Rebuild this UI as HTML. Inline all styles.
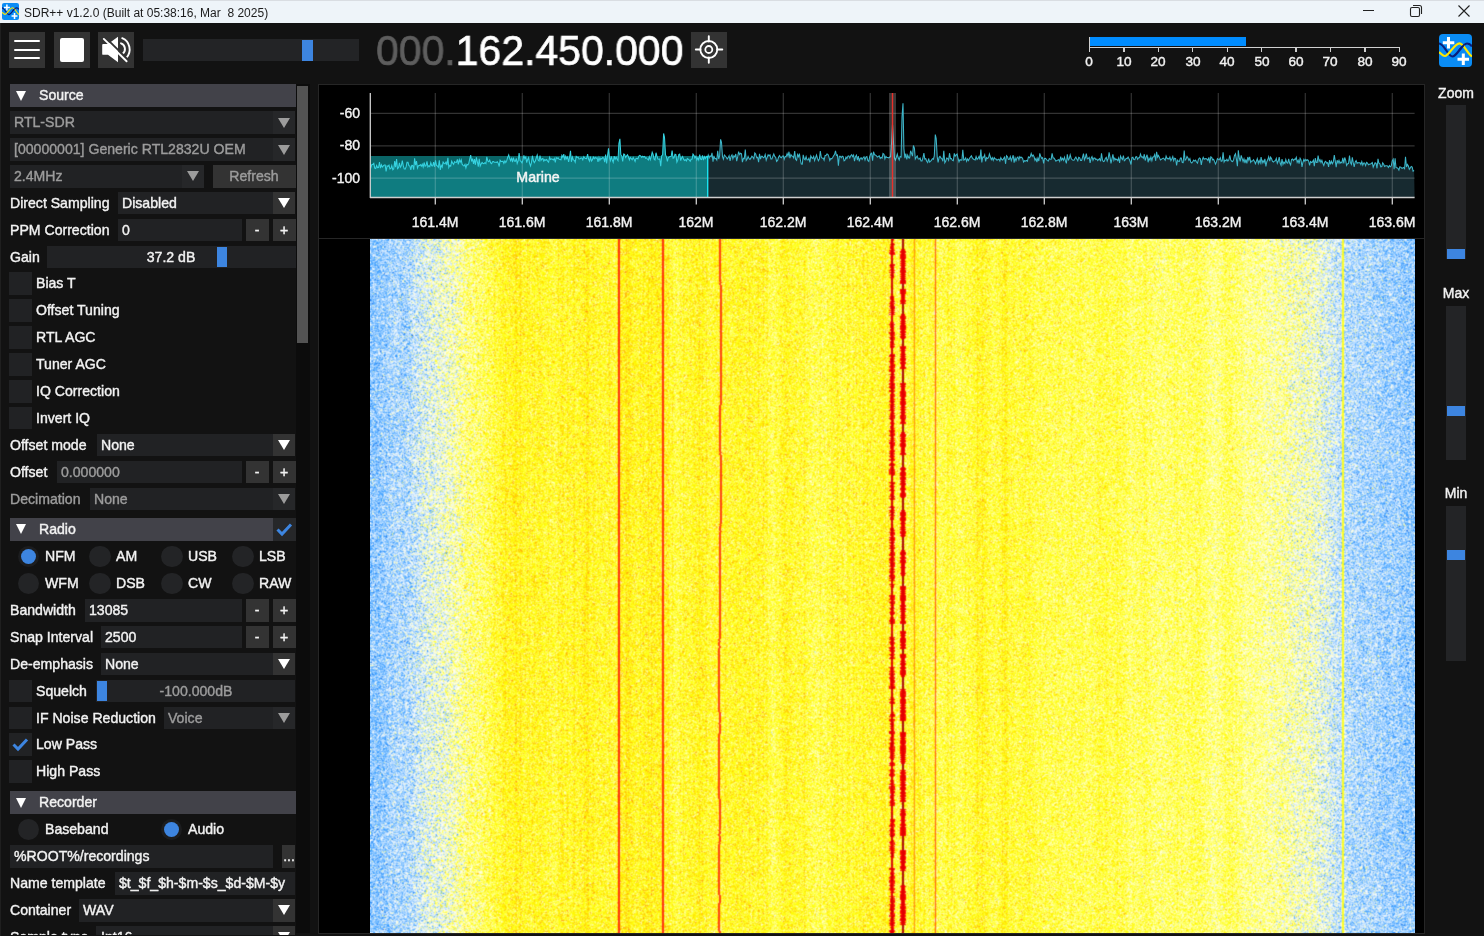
<!DOCTYPE html><html><head><meta charset="utf-8"><style>
html,body{margin:0;padding:0}
body{width:1484px;height:936px;overflow:hidden;background:#121212;position:relative;font-family:"Liberation Sans",sans-serif}
div,svg{position:absolute}
.t{white-space:nowrap;will-change:transform;-webkit-text-stroke:0.4px currentColor}
</style></head><body>

<div style="left:0px;top:0px;width:1484px;height:23px;background:#eef4f9;border-top:1px solid #d9dde2;box-sizing:border-box"></div>
<svg style="left:2px;top:3px" width="17" height="17" viewBox="0 0 33 33">
<defs><clipPath id="lc2"><rect x="19.5" y="9" width="5.5" height="7"/></clipPath></defs>
<rect x="0" y="0" width="33" height="33" rx="4" fill="#0a8cf5"/>
<path d="M0 9.5 C5 9.5 9 22.5 13.5 22.5 C18 22.5 23 9.5 28 9.5 C31 9.5 32 11 33 12.5" stroke="#0a1f7a" stroke-width="2.2" fill="none"/>
<path d="M0 18 C3 21 4 22 6 22 C10 22 15 9.3 20.5 9.3 C25 9.3 29 21 33 22.2" stroke="#ffe800" stroke-width="2.2" fill="none"/>
<path d="M0 9.5 C5 9.5 9 22.5 13.5 22.5 C18 22.5 23 9.5 28 9.5 C31 9.5 32 11 33 12.5" stroke="#0a1f7a" stroke-width="2.2" fill="none" clip-path="url(#lc2)"/>
<path d="M9.5 3 V14.5 M3.8 8.8 H15.3 M24.3 19.5 V31 M18.5 25.2 H30" stroke="#fff" stroke-width="3" fill="none"/>
</svg>
<div class="t" style="left:24px;top:1.7px;height:22px;line-height:22px;color:#1b1b1b;font-size:12px;-webkit-text-stroke:0">SDR++ v1.2.0 (Built at 05:38:16, Mar&nbsp; 8 2025)</div>
<div style="left:1363px;top:10.2px;width:11px;height:1.2px;background:#222;"></div>
<svg style="left:1408px;top:4px" width="16" height="14" viewBox="0 0 16 14"><rect x="2.5" y="3.5" width="9" height="9" rx="1.5" stroke="#222" stroke-width="1.1" fill="none"/><path d="M5 1.5 H11.5 A2 2 0 0 1 13.5 3.5 V10" stroke="#222" stroke-width="1.1" fill="none"/></svg>
<svg style="left:1457px;top:4px" width="14" height="14" viewBox="0 0 14 14"><path d="M1.5 1.5 L12.5 12.5 M12.5 1.5 L1.5 12.5" stroke="#222" stroke-width="1.1" fill="none"/></svg>
<div style="left:9px;top:32px;width:36px;height:36px;background:#333333;"></div>
<div style="left:54px;top:32px;width:36px;height:36px;background:#333333;"></div>
<div style="left:98px;top:32px;width:36px;height:36px;background:#333333;"></div>
<div style="left:14px;top:40.2px;width:26px;height:2.2px;background:#fff;border-radius:1px"></div>
<div style="left:14px;top:48.7px;width:26px;height:2.2px;background:#fff;border-radius:1px"></div>
<div style="left:14px;top:57.2px;width:26px;height:2.2px;background:#fff;border-radius:1px"></div>
<div style="left:59.8px;top:37.6px;width:24.3px;height:24.3px;background:#fff;border-radius:2px"></div>
<svg style="left:98px;top:32px" width="36" height="36" viewBox="0 0 36 36">
<path d="M4.2 13 Q4.2 12.1 5.1 12.1 H10 L20 4.8 V30.2 L10 22.8 H5.1 Q4.2 22.8 4.2 21.9 Z" fill="#fff"/>
<path d="M23 11.3 A6 6 0 0 1 24.6 21.7" stroke="#fff" stroke-width="1.9" fill="none" stroke-linecap="round"/>
<path d="M24.2 6.2 A12.2 12.2 0 0 1 28.5 25.6" stroke="#fff" stroke-width="1.9" fill="none" stroke-linecap="round"/>
<path d="M7.3 5.4 L30.2 27.9" stroke="#333" stroke-width="2"/>
<path d="M5.8 6.9 L28.6 29.3" stroke="#fff" stroke-width="1.9" stroke-linecap="round"/>
</svg>
<div style="left:143px;top:39px;width:216px;height:22px;background:#232426;"></div>
<div style="left:302px;top:40px;width:11px;height:20.5px;background:#3d85e0;"></div>
<div class="t" style="left:375.9px;top:27.6px;height:46px;line-height:46px;font-size:42.4px;color:#fff;transform:scaleX(0.966);transform-origin:0 0;-webkit-text-stroke:0.7px currentColor"><span style="color:#5e5e5e">000.</span>162.450.000</div>
<div style="left:691px;top:32px;width:36px;height:36px;background:#333333;"></div>
<svg style="left:691px;top:32px" width="36" height="36" viewBox="0 0 36 36">
<circle cx="17.8" cy="17.5" r="8.5" stroke="#fff" stroke-width="1.8" fill="none"/>
<circle cx="17.8" cy="17.5" r="3.5" stroke="#fff" stroke-width="1.8" fill="none"/>
<path d="M17.8 4.3 V9.5 M17.8 25.5 V30.7 M4.8 17.5 H9.5 M26.1 17.5 H31.3" stroke="#fff" stroke-width="1.9" stroke-linecap="round"/>
</svg>
<div style="left:1090px;top:37.2px;width:156px;height:8.8px;background:#008cff;"></div>
<div style="left:1089px;top:37px;width:1.3px;height:15px;background:#d0d0d0;"></div>
<div style="left:1089px;top:46.6px;width:310.5px;height:1.3px;background:#d0d0d0;"></div>
<div style="left:1088.8000000000002px;top:47px;width:1.3px;height:5px;background:#d0d0d0;"></div>
<div class="t" style="left:989.4000000000001px;width:200px;text-align:center;top:55.2px;height:14px;line-height:14px;color:#f2f2f2;font-size:13.6px;">0</div>
<div style="left:1123.2300000000002px;top:47px;width:1.3px;height:5px;background:#d0d0d0;"></div>
<div class="t" style="left:1023.8300000000002px;width:200px;text-align:center;top:55.2px;height:14px;line-height:14px;color:#f2f2f2;font-size:13.6px;">10</div>
<div style="left:1157.66px;top:47px;width:1.3px;height:5px;background:#d0d0d0;"></div>
<div class="t" style="left:1058.26px;width:200px;text-align:center;top:55.2px;height:14px;line-height:14px;color:#f2f2f2;font-size:13.6px;">20</div>
<div style="left:1192.0900000000001px;top:47px;width:1.3px;height:5px;background:#d0d0d0;"></div>
<div class="t" style="left:1092.69px;width:200px;text-align:center;top:55.2px;height:14px;line-height:14px;color:#f2f2f2;font-size:13.6px;">30</div>
<div style="left:1226.5200000000002px;top:47px;width:1.3px;height:5px;background:#d0d0d0;"></div>
<div class="t" style="left:1127.1200000000001px;width:200px;text-align:center;top:55.2px;height:14px;line-height:14px;color:#f2f2f2;font-size:13.6px;">40</div>
<div style="left:1260.9500000000003px;top:47px;width:1.3px;height:5px;background:#d0d0d0;"></div>
<div class="t" style="left:1161.5500000000002px;width:200px;text-align:center;top:55.2px;height:14px;line-height:14px;color:#f2f2f2;font-size:13.6px;">50</div>
<div style="left:1295.38px;top:47px;width:1.3px;height:5px;background:#d0d0d0;"></div>
<div class="t" style="left:1195.98px;width:200px;text-align:center;top:55.2px;height:14px;line-height:14px;color:#f2f2f2;font-size:13.6px;">60</div>
<div style="left:1329.8100000000002px;top:47px;width:1.3px;height:5px;background:#d0d0d0;"></div>
<div class="t" style="left:1230.41px;width:200px;text-align:center;top:55.2px;height:14px;line-height:14px;color:#f2f2f2;font-size:13.6px;">70</div>
<div style="left:1364.2400000000002px;top:47px;width:1.3px;height:5px;background:#d0d0d0;"></div>
<div class="t" style="left:1264.8400000000001px;width:200px;text-align:center;top:55.2px;height:14px;line-height:14px;color:#f2f2f2;font-size:13.6px;">80</div>
<div style="left:1398.67px;top:47px;width:1.3px;height:5px;background:#d0d0d0;"></div>
<div class="t" style="left:1299.27px;width:200px;text-align:center;top:55.2px;height:14px;line-height:14px;color:#f2f2f2;font-size:13.6px;">90</div>
<svg style="left:1439px;top:34px" width="33" height="33" viewBox="0 0 33 33">
<defs><clipPath id="lc1439"><rect x="19.5" y="9" width="5.5" height="7"/></clipPath></defs>
<rect x="0" y="0" width="33" height="33" rx="4" fill="#0a8cf5"/>
<path d="M0 9.5 C5 9.5 9 22.5 13.5 22.5 C18 22.5 23 9.5 28 9.5 C31 9.5 32 11 33 12.5" stroke="#0a1f7a" stroke-width="2.2" fill="none"/>
<path d="M0 18 C3 21 4 22 6 22 C10 22 15 9.3 20.5 9.3 C25 9.3 29 21 33 22.2" stroke="#ffe800" stroke-width="2.2" fill="none"/>
<path d="M0 9.5 C5 9.5 9 22.5 13.5 22.5 C18 22.5 23 9.5 28 9.5 C31 9.5 32 11 33 12.5" stroke="#0a1f7a" stroke-width="2.2" fill="none" clip-path="url(#lc1439)"/>
<path d="M9.5 3 V14.5 M3.8 8.8 H15.3 M24.3 19.5 V31 M18.5 25.2 H30" stroke="#fff" stroke-width="3" fill="none"/>
</svg>
<div style="left:296px;top:84px;width:14px;height:849px;background:#0c0c0c;"></div>
<div style="left:297px;top:86px;width:11.3px;height:257px;background:#535353;"></div>
<div style="left:318px;top:84px;width:1px;height:849px;background:#262626;"></div>
<div style="left:10px;top:84.2px;width:285.5px;height:22.7px;background:#424249;"></div>
<div style="left:16.1px;top:90.55px;width:0;height:0;border-left:5.5px solid transparent;border-right:5.5px solid transparent;border-top:10px solid #fff"></div>
<div class="t" style="left:38.5px;top:84.2px;height:22.7px;line-height:22.7px;color:#f2f2f2;font-size:14.1px;">Source</div>
<div style="left:10px;top:111.2px;width:285px;height:22.7px;background:#212224;"></div>
<div style="left:272.5px;top:111.2px;width:22.5px;height:22.7px;background:#262729;"></div>
<div style="left:277.8px;top:117.55px;width:0;height:0;border-left:6.0px solid transparent;border-right:6.0px solid transparent;border-top:10px solid #9c9c9c"></div>
<div class="t" style="left:14.2px;top:111.2px;height:22.7px;line-height:22.7px;color:#9c9c9c;font-size:14.1px;">RTL-SDR</div>
<div style="left:10px;top:138.2px;width:285px;height:22.7px;background:#212224;"></div>
<div style="left:272.5px;top:138.2px;width:22.5px;height:22.7px;background:#262729;"></div>
<div style="left:277.8px;top:144.54999999999998px;width:0;height:0;border-left:6.0px solid transparent;border-right:6.0px solid transparent;border-top:10px solid #9c9c9c"></div>
<div class="t" style="left:14.2px;top:138.2px;height:22.7px;line-height:22.7px;color:#9c9c9c;font-size:14.1px;">[00000001] Generic RTL2832U OEM</div>
<div style="left:10px;top:164.9px;width:194px;height:22.7px;background:#212224;"></div>
<div style="left:181.5px;top:164.9px;width:22.5px;height:22.7px;background:#262729;"></div>
<div style="left:186.8px;top:171.25px;width:0;height:0;border-left:6.0px solid transparent;border-right:6.0px solid transparent;border-top:10px solid #9c9c9c"></div>
<div class="t" style="left:14.2px;top:164.9px;height:22.7px;line-height:22.7px;color:#9c9c9c;font-size:14.1px;">2.4MHz</div>
<div style="left:213px;top:164.9px;width:82.5px;height:22.7px;background:#333333;"></div>
<div class="t" style="left:154.25px;width:200px;text-align:center;top:164.9px;height:22.7px;line-height:22.7px;color:#9c9c9c;font-size:14.1px;">Refresh</div>
<div class="t" style="left:9.8px;top:191.8px;height:22.7px;line-height:22.7px;color:#f2f2f2;font-size:14.1px;">Direct Sampling</div>
<div style="left:118px;top:191.8px;width:177px;height:22.7px;background:#212224;"></div>
<div style="left:272.5px;top:191.8px;width:22.5px;height:22.7px;background:#333333;"></div>
<div style="left:277.8px;top:198.15px;width:0;height:0;border-left:6.0px solid transparent;border-right:6.0px solid transparent;border-top:10px solid #fff"></div>
<div class="t" style="left:122.2px;top:191.8px;height:22.7px;line-height:22.7px;color:#f2f2f2;font-size:14.1px;">Disabled</div>
<div class="t" style="left:9.8px;top:218.7px;height:22.7px;line-height:22.7px;color:#f2f2f2;font-size:14.1px;">PPM Correction</div>
<div style="left:118px;top:218.7px;width:123.5px;height:22.7px;background:#212224;"></div>
<div class="t" style="left:122.2px;top:218.7px;height:22.7px;line-height:22.7px;color:#f2f2f2;font-size:14.1px;">0</div>
<div style="left:246px;top:218.7px;width:22.5px;height:22.7px;background:#333333;"></div>
<div class="t" style="left:157.25px;width:200px;text-align:center;top:218.7px;height:22.7px;line-height:22.7px;color:#f2f2f2;font-size:14.1px;">-</div>
<div style="left:273px;top:218.7px;width:22.5px;height:22.7px;background:#333333;"></div>
<div class="t" style="left:184.25px;width:200px;text-align:center;top:218.7px;height:22.7px;line-height:22.7px;color:#f2f2f2;font-size:14.1px;">+</div>
<div class="t" style="left:9.8px;top:245.6px;height:22.7px;line-height:22.7px;color:#f2f2f2;font-size:14.1px;">Gain</div>
<div style="left:46.5px;top:245.6px;width:249px;height:22.7px;background:#212224;"></div>
<div style="left:216.5px;top:246.6px;width:10.5px;height:20.5px;background:#3d85e0;"></div>
<div class="t" style="left:71px;width:200px;text-align:center;top:245.6px;height:22.7px;line-height:22.7px;color:#f2f2f2;font-size:14.1px;">37.2 dB</div>
<div style="left:9px;top:272.3px;width:23px;height:22.7px;background:#212224;"></div>
<div class="t" style="left:36.2px;top:272.3px;height:22.7px;line-height:22.7px;color:#f2f2f2;font-size:14.1px;">Bias T</div>
<div style="left:9px;top:299.2px;width:23px;height:22.7px;background:#212224;"></div>
<div class="t" style="left:36.2px;top:299.2px;height:22.7px;line-height:22.7px;color:#f2f2f2;font-size:14.1px;">Offset Tuning</div>
<div style="left:9px;top:326.1px;width:23px;height:22.7px;background:#212224;"></div>
<div class="t" style="left:36.2px;top:326.1px;height:22.7px;line-height:22.7px;color:#f2f2f2;font-size:14.1px;">RTL AGC</div>
<div style="left:9px;top:353.0px;width:23px;height:22.7px;background:#212224;"></div>
<div class="t" style="left:36.2px;top:353.0px;height:22.7px;line-height:22.7px;color:#f2f2f2;font-size:14.1px;">Tuner AGC</div>
<div style="left:9px;top:379.9px;width:23px;height:22.7px;background:#212224;"></div>
<div class="t" style="left:36.2px;top:379.9px;height:22.7px;line-height:22.7px;color:#f2f2f2;font-size:14.1px;">IQ Correction</div>
<div style="left:9px;top:406.8px;width:23px;height:22.7px;background:#212224;"></div>
<div class="t" style="left:36.2px;top:406.8px;height:22.7px;line-height:22.7px;color:#f2f2f2;font-size:14.1px;">Invert IQ</div>
<div class="t" style="left:9.8px;top:433.8px;height:22.7px;line-height:22.7px;color:#f2f2f2;font-size:14.1px;">Offset mode</div>
<div style="left:97px;top:433.8px;width:198px;height:22.7px;background:#212224;"></div>
<div style="left:272.5px;top:433.8px;width:22.5px;height:22.7px;background:#333333;"></div>
<div style="left:277.8px;top:440.15000000000003px;width:0;height:0;border-left:6.0px solid transparent;border-right:6.0px solid transparent;border-top:10px solid #fff"></div>
<div class="t" style="left:101.2px;top:433.8px;height:22.7px;line-height:22.7px;color:#f2f2f2;font-size:14.1px;">None</div>
<div class="t" style="left:9.8px;top:460.7px;height:22.7px;line-height:22.7px;color:#f2f2f2;font-size:14.1px;">Offset</div>
<div style="left:57px;top:460.7px;width:184.5px;height:22.7px;background:#212224;"></div>
<div class="t" style="left:61.2px;top:460.7px;height:22.7px;line-height:22.7px;color:#9c9c9c;font-size:14.1px;">0.000000</div>
<div style="left:246px;top:460.7px;width:22.5px;height:22.7px;background:#333333;"></div>
<div class="t" style="left:157.25px;width:200px;text-align:center;top:460.7px;height:22.7px;line-height:22.7px;color:#f2f2f2;font-size:14.1px;">-</div>
<div style="left:273px;top:460.7px;width:22.5px;height:22.7px;background:#333333;"></div>
<div class="t" style="left:184.25px;width:200px;text-align:center;top:460.7px;height:22.7px;line-height:22.7px;color:#f2f2f2;font-size:14.1px;">+</div>
<div class="t" style="left:9.8px;top:487.6px;height:22.7px;line-height:22.7px;color:#9c9c9c;font-size:14.1px;">Decimation</div>
<div style="left:90px;top:487.6px;width:205px;height:22.7px;background:#212224;"></div>
<div style="left:272.5px;top:487.6px;width:22.5px;height:22.7px;background:#262729;"></div>
<div style="left:277.8px;top:493.95000000000005px;width:0;height:0;border-left:6.0px solid transparent;border-right:6.0px solid transparent;border-top:10px solid #9c9c9c"></div>
<div class="t" style="left:94.2px;top:487.6px;height:22.7px;line-height:22.7px;color:#9c9c9c;font-size:14.1px;">None</div>
<div style="left:10px;top:518px;width:262.8px;height:22.7px;background:#424249;"></div>
<div style="left:16.1px;top:524.35px;width:0;height:0;border-left:5.5px solid transparent;border-right:5.5px solid transparent;border-top:10px solid #fff"></div>
<div class="t" style="left:38.5px;top:518px;height:22.7px;line-height:22.7px;color:#f2f2f2;font-size:14.1px;">Radio</div>
<div style="left:273px;top:518px;width:22.5px;height:22.7px;background:#262729;"></div>
<svg style="left:273px;top:518px" width="23" height="23" viewBox="0 0 23 23"><path d="M4.5 11.5 L9 16 L18 6.5" stroke="#3d85e0" stroke-width="3" fill="none"/></svg>
<div style="left:18.1px;top:545.8px;width:21.2px;height:21.2px;border-radius:50%;background:#1c1d1f"></div>
<div style="left:21.1px;top:548.8px;width:15.2px;height:15.2px;border-radius:50%;background:#3d85e0"></div>
<div class="t" style="left:44.7px;top:545.05px;height:22.7px;line-height:22.7px;color:#f2f2f2;font-size:14.1px;">NFM</div>
<div style="left:89.4px;top:545.6px;width:21.6px;height:21.6px;border-radius:50%;background:#232426"></div>
<div class="t" style="left:116.2px;top:545.05px;height:22.7px;line-height:22.7px;color:#f2f2f2;font-size:14.1px;">AM</div>
<div style="left:161.0px;top:545.6px;width:21.6px;height:21.6px;border-radius:50%;background:#232426"></div>
<div class="t" style="left:187.8px;top:545.05px;height:22.7px;line-height:22.7px;color:#f2f2f2;font-size:14.1px;">USB</div>
<div style="left:232.29999999999998px;top:545.6px;width:21.6px;height:21.6px;border-radius:50%;background:#232426"></div>
<div class="t" style="left:259.1px;top:545.05px;height:22.7px;line-height:22.7px;color:#f2f2f2;font-size:14.1px;">LSB</div>
<div style="left:17.9px;top:572.5px;width:21.6px;height:21.6px;border-radius:50%;background:#232426"></div>
<div class="t" style="left:44.7px;top:571.9499999999999px;height:22.7px;line-height:22.7px;color:#f2f2f2;font-size:14.1px;">WFM</div>
<div style="left:89.4px;top:572.5px;width:21.6px;height:21.6px;border-radius:50%;background:#232426"></div>
<div class="t" style="left:116.2px;top:571.9499999999999px;height:22.7px;line-height:22.7px;color:#f2f2f2;font-size:14.1px;">DSB</div>
<div style="left:161.0px;top:572.5px;width:21.6px;height:21.6px;border-radius:50%;background:#232426"></div>
<div class="t" style="left:187.8px;top:571.9499999999999px;height:22.7px;line-height:22.7px;color:#f2f2f2;font-size:14.1px;">CW</div>
<div style="left:232.29999999999998px;top:572.5px;width:21.6px;height:21.6px;border-radius:50%;background:#232426"></div>
<div class="t" style="left:259.1px;top:571.9499999999999px;height:22.7px;line-height:22.7px;color:#f2f2f2;font-size:14.1px;">RAW</div>
<div class="t" style="left:9.8px;top:598.9px;height:22.7px;line-height:22.7px;color:#f2f2f2;font-size:14.1px;">Bandwidth</div>
<div style="left:85px;top:598.9px;width:156.5px;height:22.7px;background:#212224;"></div>
<div class="t" style="left:89.2px;top:598.9px;height:22.7px;line-height:22.7px;color:#f2f2f2;font-size:14.1px;">13085</div>
<div style="left:246px;top:598.9px;width:22.5px;height:22.7px;background:#333333;"></div>
<div class="t" style="left:157.25px;width:200px;text-align:center;top:598.9px;height:22.7px;line-height:22.7px;color:#f2f2f2;font-size:14.1px;">-</div>
<div style="left:273px;top:598.9px;width:22.5px;height:22.7px;background:#333333;"></div>
<div class="t" style="left:184.25px;width:200px;text-align:center;top:598.9px;height:22.7px;line-height:22.7px;color:#f2f2f2;font-size:14.1px;">+</div>
<div class="t" style="left:9.8px;top:625.8px;height:22.7px;line-height:22.7px;color:#f2f2f2;font-size:14.1px;">Snap Interval</div>
<div style="left:101px;top:625.8px;width:140.5px;height:22.7px;background:#212224;"></div>
<div class="t" style="left:105.2px;top:625.8px;height:22.7px;line-height:22.7px;color:#f2f2f2;font-size:14.1px;">2500</div>
<div style="left:246px;top:625.8px;width:22.5px;height:22.7px;background:#333333;"></div>
<div class="t" style="left:157.25px;width:200px;text-align:center;top:625.8px;height:22.7px;line-height:22.7px;color:#f2f2f2;font-size:14.1px;">-</div>
<div style="left:273px;top:625.8px;width:22.5px;height:22.7px;background:#333333;"></div>
<div class="t" style="left:184.25px;width:200px;text-align:center;top:625.8px;height:22.7px;line-height:22.7px;color:#f2f2f2;font-size:14.1px;">+</div>
<div class="t" style="left:9.8px;top:652.7px;height:22.7px;line-height:22.7px;color:#f2f2f2;font-size:14.1px;">De-emphasis</div>
<div style="left:101px;top:652.7px;width:194px;height:22.7px;background:#212224;"></div>
<div style="left:272.5px;top:652.7px;width:22.5px;height:22.7px;background:#333333;"></div>
<div style="left:277.8px;top:659.0500000000001px;width:0;height:0;border-left:6.0px solid transparent;border-right:6.0px solid transparent;border-top:10px solid #fff"></div>
<div class="t" style="left:105.2px;top:652.7px;height:22.7px;line-height:22.7px;color:#f2f2f2;font-size:14.1px;">None</div>
<div style="left:9px;top:679.6px;width:23px;height:22.7px;background:#212224;"></div>
<div class="t" style="left:36.2px;top:679.6px;height:22.7px;line-height:22.7px;color:#f2f2f2;font-size:14.1px;">Squelch</div>
<div style="left:96.3px;top:679.6px;width:199px;height:22.7px;background:#212224;"></div>
<div style="left:96.8px;top:680.6px;width:10.5px;height:20.5px;background:#3d85e0;"></div>
<div class="t" style="left:96px;width:200px;text-align:center;top:679.6px;height:22.7px;line-height:22.7px;color:#9c9c9c;font-size:14.1px;">-100.000dB</div>
<div style="left:9px;top:706.5px;width:23px;height:22.7px;background:#212224;"></div>
<div class="t" style="left:36.2px;top:706.5px;height:22.7px;line-height:22.7px;color:#f2f2f2;font-size:14.1px;">IF Noise Reduction</div>
<div style="left:164px;top:706.5px;width:131px;height:22.7px;background:#212224;"></div>
<div style="left:272.5px;top:706.5px;width:22.5px;height:22.7px;background:#262729;"></div>
<div style="left:277.8px;top:712.85px;width:0;height:0;border-left:6.0px solid transparent;border-right:6.0px solid transparent;border-top:10px solid #9c9c9c"></div>
<div class="t" style="left:168.2px;top:706.5px;height:22.7px;line-height:22.7px;color:#9c9c9c;font-size:14.1px;">Voice</div>
<div style="left:9px;top:733.4px;width:23px;height:22.7px;background:#212224;"></div>
<svg style="left:9px;top:733.4px" width="23" height="23" viewBox="0 0 23 23"><path d="M4.5 11.5 L9 16 L18 6.5" stroke="#3d85e0" stroke-width="3" fill="none"/></svg>
<div class="t" style="left:36.2px;top:733.4px;height:22.7px;line-height:22.7px;color:#f2f2f2;font-size:14.1px;">Low Pass</div>
<div style="left:9px;top:760.3px;width:23px;height:22.7px;background:#212224;"></div>
<div class="t" style="left:36.2px;top:760.3px;height:22.7px;line-height:22.7px;color:#f2f2f2;font-size:14.1px;">High Pass</div>
<div style="left:10px;top:791.3px;width:285.5px;height:22.7px;background:#424249;"></div>
<div style="left:16.1px;top:797.65px;width:0;height:0;border-left:5.5px solid transparent;border-right:5.5px solid transparent;border-top:10px solid #fff"></div>
<div class="t" style="left:38.5px;top:791.3px;height:22.7px;line-height:22.7px;color:#f2f2f2;font-size:14.1px;">Recorder</div>
<div style="left:17.9px;top:818.6px;width:21.6px;height:21.6px;border-radius:50%;background:#232426"></div>
<div class="t" style="left:44.7px;top:818.05px;height:22.7px;line-height:22.7px;color:#f2f2f2;font-size:14.1px;">Baseband</div>
<div style="left:161.20000000000002px;top:818.8px;width:21.2px;height:21.2px;border-radius:50%;background:#1c1d1f"></div>
<div style="left:164.20000000000002px;top:821.8px;width:15.2px;height:15.2px;border-radius:50%;background:#3d85e0"></div>
<div class="t" style="left:187.8px;top:818.05px;height:22.7px;line-height:22.7px;color:#f2f2f2;font-size:14.1px;">Audio</div>
<div style="left:9.5px;top:845.2px;width:263.3px;height:22.7px;background:#212224;"></div>
<div class="t" style="left:13.7px;top:845.2px;height:22.7px;line-height:22.7px;color:#f2f2f2;font-size:14.1px;">%ROOT%/recordings</div>
<div style="left:281.8px;top:845.2px;width:13.7px;height:22.7px;background:#333333;"></div>
<div class="t" style="left:188.65000000000003px;width:200px;text-align:center;top:845.2px;height:22.7px;line-height:22.7px;color:#f2f2f2;font-size:14.1px;">...</div>
<div class="t" style="left:9.8px;top:872.1px;height:22.7px;line-height:22.7px;color:#f2f2f2;font-size:14.1px;">Name template</div>
<div style="left:115px;top:872.1px;width:180px;height:22.7px;background:#212224;"></div>
<div class="t" style="left:119.2px;top:872.1px;height:22.7px;line-height:22.7px;color:#f2f2f2;font-size:14.1px;">$t_$f_$h-$m-$s_$d-$M-$y</div>
<div class="t" style="left:9.8px;top:899px;height:22.7px;line-height:22.7px;color:#f2f2f2;font-size:14.1px;">Container</div>
<div style="left:79px;top:899px;width:216px;height:22.7px;background:#212224;"></div>
<div style="left:272.5px;top:899px;width:22.5px;height:22.7px;background:#333333;"></div>
<div style="left:277.8px;top:905.35px;width:0;height:0;border-left:6.0px solid transparent;border-right:6.0px solid transparent;border-top:10px solid #fff"></div>
<div class="t" style="left:83.2px;top:899px;height:22.7px;line-height:22.7px;color:#f2f2f2;font-size:14.1px;">WAV</div>
<div style="left:0;top:925.9px;width:296px;height:9px;overflow:hidden">
<div class="t" style="left:9.8px;top:0.4px;height:22.7px;line-height:22.7px;color:#f2f2f2;font-size:14.1px;">Sample type</div>
<div style="left:96.4px;top:0px;width:198.6px;height:22.7px;background:#212224;"></div>
<div style="left:272.5px;top:0px;width:22.5px;height:22.7px;background:#333333;"></div>
<div style="left:277.8px;top:6.35px;width:0;height:0;border-left:6.0px solid transparent;border-right:6.0px solid transparent;border-top:10px solid #fff"></div>
<div class="t" style="left:100.60000000000001px;top:0px;height:22.7px;line-height:22.7px;color:#f2f2f2;font-size:14.1px;">Int16</div>
</div>
<div style="left:0px;top:23px;width:1px;height:913px;background:#1f1f1f;"></div>
<div style="left:318px;top:84px;width:1107px;height:850px;background:#000;border:1px solid #262626;box-sizing:border-box"></div>
<div style="left:319px;top:238px;width:1105px;height:1.1px;background:#262626;"></div>
<svg style="left:0;top:0" width="1484" height="240" viewBox="0 0 1484 240">
<defs><clipPath id="cb"><rect x="370" y="0" width="337.7" height="240"/></clipPath><clipPath id="co"><rect x="707.7" y="0" width="800" height="240"/></clipPath></defs>
<rect x="370" y="156" width="337.70000000000005" height="41.5" fill="#0a6567"/>
<polygon points="370,197.5 370.0,166.0 370.9,167.5 371.9,164.4 372.8,164.4 373.8,163.3 374.7,168.1 375.7,168.5 376.6,165.5 377.6,167.6 378.5,167.5 379.5,162.0 380.4,168.1 381.4,164.9 382.3,167.1 383.3,165.9 384.2,165.0 385.2,165.1 386.1,171.5 387.1,165.8 388.0,166.4 389.0,165.2 389.9,169.0 390.9,168.3 391.8,165.5 392.8,169.8 393.7,169.0 394.7,161.1 395.6,167.1 396.6,159.0 397.5,168.7 398.5,167.8 399.4,162.8 400.4,167.2 401.3,165.9 402.3,160.7 403.2,165.4 404.2,168.9 405.1,169.1 406.1,166.9 407.0,162.3 408.0,162.3 408.9,165.6 409.9,166.1 410.8,169.9 411.8,165.3 412.7,165.4 413.7,169.6 414.6,158.3 415.6,165.2 416.5,161.0 417.5,168.0 418.4,165.8 419.4,165.5 420.3,164.6 421.3,166.2 422.2,164.2 423.2,167.0 424.1,162.5 425.1,166.2 426.0,165.7 427.0,161.4 427.9,167.0 428.9,165.7 429.8,166.7 430.8,162.7 431.7,165.7 432.7,165.9 433.6,162.1 434.6,166.8 435.5,160.3 436.5,165.5 437.4,165.9 438.4,167.4 439.3,160.2 440.3,169.9 441.2,165.3 442.2,167.2 443.1,162.1 444.1,163.4 445.0,163.8 446.0,162.1 446.9,165.1 447.9,157.9 448.8,167.5 449.8,165.3 450.7,166.2 451.7,161.1 452.6,163.0 453.6,164.4 454.5,161.8 455.5,162.3 456.4,162.5 457.4,159.4 458.3,164.5 459.3,159.6 460.2,162.1 461.2,159.8 462.1,164.2 463.1,165.3 464.0,166.0 465.0,164.4 465.9,168.0 466.9,164.4 467.8,165.0 468.8,163.2 469.7,159.0 470.7,155.1 471.6,161.5 472.6,158.6 473.5,163.9 474.5,159.2 475.4,164.8 476.4,157.4 477.3,161.5 478.3,166.7 479.2,158.7 480.2,166.1 481.1,164.1 482.1,162.4 483.0,163.4 484.0,163.6 484.9,162.7 485.9,163.6 486.8,156.8 487.8,161.0 488.7,161.7 489.7,160.1 490.6,162.9 491.6,163.7 492.5,161.7 493.5,161.5 494.4,162.3 495.4,162.2 496.3,162.4 497.3,161.7 498.2,163.2 499.2,166.5 500.1,160.3 501.1,161.4 502.0,161.5 503.0,161.2 503.9,163.4 504.9,160.8 505.8,162.6 506.8,160.4 507.7,157.4 508.7,154.9 509.6,158.4 510.6,160.7 511.5,157.6 512.5,162.2 513.4,157.6 514.4,161.0 515.3,161.4 516.3,158.4 517.2,163.4 518.2,160.7 519.1,153.0 520.1,160.7 521.0,161.4 522.0,162.8 522.9,160.2 523.9,155.4 524.8,158.7 525.8,156.9 526.7,162.7 527.7,159.4 528.6,157.7 529.6,163.3 530.5,165.9 531.5,162.4 532.4,155.7 533.4,160.8 534.3,162.6 535.3,161.1 536.2,158.0 537.2,155.1 538.1,160.0 539.1,161.0 540.0,155.7 541.0,160.4 541.9,159.0 542.9,158.5 543.8,161.1 544.8,159.6 545.7,160.3 546.7,159.6 547.6,161.1 548.6,162.2 549.6,157.2 550.5,159.4 551.5,158.8 552.4,159.3 553.4,160.0 554.3,158.4 555.3,162.3 556.2,157.5 557.2,158.5 558.1,157.8 559.1,159.2 560.0,159.4 561.0,159.8 561.9,155.4 562.9,157.3 563.8,154.1 564.8,160.1 565.7,156.2 566.7,158.8 567.6,157.1 568.6,162.0 569.5,157.7 570.5,150.7 571.4,161.8 572.4,157.0 573.3,159.9 574.3,160.4 575.2,162.3 576.2,156.4 577.1,157.4 578.1,157.1 579.0,158.9 580.0,158.8 580.9,158.0 581.9,158.1 582.8,159.8 583.8,156.7 584.7,158.0 585.7,158.4 586.6,158.6 587.6,154.2 588.5,159.0 589.5,161.1 590.4,156.6 591.4,161.1 592.3,159.9 593.3,157.1 594.2,158.7 595.2,157.4 596.1,158.3 597.1,157.8 598.0,162.0 599.0,157.5 599.9,160.3 600.9,158.1 601.8,159.0 602.8,157.5 603.7,158.0 604.7,162.2 605.6,154.5 606.6,163.4 607.5,156.1 608.5,148.3 609.4,157.4 610.4,160.6 611.3,156.4 612.3,160.0 613.2,162.3 614.2,156.2 615.1,159.3 616.1,157.0 617.0,158.9 618.0,160.6 618.9,143.5 619.9,138.8 620.8,154.4 621.8,156.1 622.7,161.4 623.7,154.1 624.6,154.5 625.6,157.5 626.5,156.1 627.5,154.7 628.4,156.8 629.4,159.9 630.3,157.5 631.3,158.6 632.2,159.8 633.2,157.4 634.1,159.2 635.1,161.4 636.0,158.4 637.0,158.3 637.9,158.9 638.9,156.0 639.8,155.3 640.8,156.0 641.7,157.4 642.7,156.3 643.6,157.0 644.6,156.4 645.5,158.3 646.5,157.8 647.4,159.0 648.4,160.0 649.3,156.6 650.3,159.8 651.2,156.7 652.2,152.3 653.1,154.4 654.1,159.1 655.0,159.9 656.0,152.7 656.9,156.0 657.9,159.1 658.8,159.2 659.8,158.9 660.7,166.2 661.7,155.7 662.6,154.9 663.6,133.4 664.5,137.4 665.5,154.6 666.4,156.8 667.4,161.3 668.3,157.5 669.3,157.0 670.2,156.4 671.2,156.3 672.1,150.6 673.1,158.2 674.0,157.8 675.0,154.2 675.9,154.6 676.9,162.2 677.8,160.2 678.8,154.5 679.7,154.1 680.7,160.7 681.6,158.0 682.6,156.4 683.5,159.2 684.5,160.4 685.4,159.7 686.4,160.9 687.3,158.6 688.3,159.2 689.2,159.9 690.2,161.3 691.1,159.3 692.1,159.0 693.0,154.1 694.0,155.6 694.9,157.9 695.9,156.1 696.8,160.0 697.8,157.9 698.7,160.0 699.7,154.6 700.6,159.1 701.6,159.6 702.5,155.4 703.5,160.2 704.4,156.7 705.4,158.6 706.3,156.5 707.3,157.7 708.2,155.0 709.2,157.9 710.1,155.9 711.1,156.8 712.0,152.9 713.0,161.6 713.9,155.9 714.9,158.7 715.8,158.3 716.8,160.0 717.7,150.9 718.7,159.0 719.6,156.0 720.6,139.3 721.5,142.3 722.5,156.7 723.4,159.2 724.4,155.0 725.3,156.0 726.3,157.3 727.2,159.0 728.2,157.6 729.1,155.7 730.1,161.0 731.0,156.5 732.0,154.9 732.9,158.8 733.9,155.9 734.8,157.0 735.8,154.0 736.7,161.2 737.7,156.7 738.6,151.6 739.6,154.6 740.5,153.2 741.5,153.9 742.4,162.2 743.4,158.3 744.3,158.7 745.3,149.6 746.2,160.5 747.2,159.1 748.1,156.4 749.1,158.7 750.0,159.4 751.0,157.9 751.9,156.2 752.9,157.2 753.8,158.8 754.8,153.0 755.7,154.1 756.7,157.7 757.6,157.2 758.6,162.1 759.5,153.9 760.5,159.2 761.4,156.3 762.4,156.2 763.3,157.8 764.3,157.2 765.2,154.6 766.2,160.2 767.1,157.6 768.1,154.8 769.0,155.9 770.0,154.8 770.9,159.0 771.9,159.0 772.8,156.4 773.8,154.0 774.7,156.4 775.7,157.3 776.6,161.4 777.6,160.4 778.5,157.3 779.5,155.5 780.4,157.1 781.4,157.8 782.3,156.1 783.3,155.9 784.2,159.2 785.2,156.4 786.1,156.8 787.1,153.6 788.0,156.2 789.0,151.7 789.9,158.1 790.9,154.6 791.8,156.1 792.8,156.2 793.7,157.8 794.7,151.0 795.6,159.3 796.6,160.3 797.5,154.6 798.5,156.7 799.4,153.6 800.4,160.0 801.3,164.0 802.3,164.2 803.2,154.9 804.2,158.9 805.1,159.7 806.1,156.6 807.0,159.8 808.0,159.9 808.9,158.2 809.9,162.3 810.8,155.9 811.8,157.8 812.7,158.4 813.7,156.3 814.6,160.5 815.6,157.6 816.5,155.1 817.5,158.7 818.4,160.8 819.4,158.8 820.3,151.0 821.3,157.3 822.2,158.3 823.2,158.1 824.1,160.3 825.1,155.6 826.0,155.5 827.0,154.0 827.9,154.4 828.9,156.9 829.8,160.5 830.8,158.5 831.7,158.8 832.7,157.5 833.6,155.7 834.6,154.4 835.5,150.8 836.5,155.5 837.4,154.9 838.4,165.6 839.3,156.3 840.3,156.3 841.2,157.7 842.2,156.2 843.1,156.6 844.1,160.9 845.0,160.2 846.0,157.1 846.9,158.6 847.9,156.1 848.8,155.8 849.8,158.0 850.7,155.7 851.7,154.7 852.6,156.7 853.6,155.1 854.5,161.1 855.5,156.6 856.4,155.1 857.4,160.1 858.3,156.0 859.3,161.4 860.2,158.4 861.2,157.7 862.1,159.4 863.1,157.7 864.0,156.7 865.0,160.0 865.9,157.1 866.9,156.6 867.8,160.5 868.8,161.4 869.7,156.7 870.7,153.9 871.6,153.2 872.6,160.6 873.5,151.7 874.5,154.7 875.4,154.9 876.4,155.8 877.3,157.0 878.3,156.5 879.2,155.9 880.2,158.4 881.1,157.3 882.1,158.1 883.0,153.4 884.0,154.3 884.9,158.9 885.9,156.3 886.8,157.5 887.8,157.6 888.7,157.9 889.7,157.1 890.6,156.9 891.6,142.3 892.5,124.4 893.5,142.3 894.4,157.8 895.4,160.1 896.3,157.5 897.3,154.1 898.2,157.8 899.2,160.0 900.1,156.5 901.1,156.9 902.0,116.9 903.0,103.3 903.9,148.5 904.9,158.2 905.8,153.6 906.8,159.5 907.7,155.1 908.7,157.8 909.6,158.0 910.6,150.8 911.5,153.2 912.5,156.1 913.4,145.5 914.4,148.0 915.3,159.0 916.3,157.3 917.2,156.0 918.2,158.9 919.1,159.1 920.1,158.0 921.0,160.9 922.0,160.9 922.9,157.8 923.9,153.2 924.8,159.0 925.8,158.7 926.7,161.2 927.7,162.6 928.6,158.5 929.6,162.1 930.5,161.3 931.5,160.2 932.4,158.7 933.4,159.2 934.3,155.8 935.3,134.6 936.2,138.5 937.2,156.8 938.1,162.3 939.1,157.3 940.0,156.3 941.0,158.0 941.9,158.5 942.9,161.2 943.8,150.7 944.8,162.9 945.7,161.4 946.7,157.9 947.6,158.3 948.6,160.3 949.5,153.2 950.5,158.6 951.4,158.6 952.4,160.4 953.3,160.7 954.3,153.4 955.2,156.1 956.2,154.9 957.1,154.1 958.1,158.5 959.0,161.9 960.0,159.5 960.9,160.1 961.9,160.0 962.8,149.7 963.8,160.1 964.7,159.6 965.7,157.8 966.6,161.3 967.6,158.9 968.5,160.6 969.5,158.3 970.4,157.1 971.4,155.8 972.3,157.9 973.3,159.0 974.2,159.5 975.2,160.0 976.1,156.6 977.1,159.4 978.0,158.4 979.0,156.4 979.9,159.5 980.9,149.6 981.8,162.4 982.8,157.0 983.7,157.4 984.7,154.9 985.6,161.4 986.6,157.5 987.5,158.5 988.5,157.8 989.4,154.0 990.4,157.0 991.3,159.7 992.3,157.7 993.2,160.4 994.2,157.6 995.1,158.9 996.1,158.9 997.0,160.3 998.0,159.5 998.9,159.1 999.9,161.1 1000.8,157.7 1001.8,159.6 1002.7,160.0 1003.7,158.4 1004.6,157.1 1005.6,163.8 1006.5,155.7 1007.5,156.8 1008.4,159.4 1009.4,159.2 1010.3,156.6 1011.3,160.6 1012.2,158.1 1013.2,155.2 1014.1,162.7 1015.1,157.9 1016.0,160.8 1017.0,157.8 1017.9,156.9 1018.9,159.8 1019.8,156.6 1020.8,157.8 1021.7,157.3 1022.7,158.8 1023.6,162.1 1024.6,160.7 1025.5,161.1 1026.5,160.4 1027.4,161.3 1028.4,156.9 1029.3,157.7 1030.3,156.7 1031.2,153.5 1032.2,156.4 1033.1,155.0 1034.1,156.8 1035.0,160.3 1036.0,158.5 1036.9,162.0 1037.9,158.1 1038.8,161.0 1039.8,153.3 1040.7,156.3 1041.7,158.4 1042.6,157.7 1043.6,163.4 1044.5,158.5 1045.5,158.4 1046.4,159.3 1047.4,160.7 1048.3,161.1 1049.3,158.6 1050.2,159.3 1051.2,159.2 1052.1,153.3 1053.1,158.0 1054.0,158.0 1055.0,159.6 1055.9,161.2 1056.9,160.4 1057.8,160.1 1058.8,159.7 1059.7,161.5 1060.7,156.6 1061.6,160.1 1062.6,158.3 1063.5,160.3 1064.5,157.2 1065.4,160.7 1066.4,163.4 1067.3,154.3 1068.3,160.0 1069.2,158.8 1070.2,154.9 1071.1,158.2 1072.1,159.7 1073.0,160.2 1074.0,160.3 1074.9,158.5 1075.9,157.0 1076.8,159.1 1077.8,160.9 1078.7,157.3 1079.7,157.9 1080.6,160.5 1081.6,160.5 1082.5,157.5 1083.5,153.6 1084.4,159.9 1085.4,157.5 1086.3,153.6 1087.3,158.9 1088.2,158.6 1089.2,157.4 1090.1,162.9 1091.1,158.2 1092.0,156.6 1093.0,160.4 1093.9,158.1 1094.9,158.1 1095.8,159.5 1096.8,159.1 1097.7,160.6 1098.7,159.4 1099.6,158.7 1100.6,161.2 1101.5,153.4 1102.5,160.0 1103.4,161.6 1104.4,161.2 1105.3,158.4 1106.3,157.3 1107.2,161.0 1108.2,158.4 1109.1,152.4 1110.1,157.6 1111.0,163.4 1112.0,158.7 1112.9,154.3 1113.9,160.4 1114.8,158.1 1115.8,159.8 1116.7,159.3 1117.7,160.6 1118.6,158.0 1119.6,163.0 1120.5,156.1 1121.5,158.3 1122.4,159.6 1123.4,155.7 1124.3,160.7 1125.3,159.8 1126.2,158.3 1127.2,158.6 1128.1,157.1 1129.1,159.1 1130.0,161.0 1131.0,164.5 1131.9,157.7 1132.9,157.2 1133.8,159.6 1134.8,159.7 1135.7,157.0 1136.7,156.6 1137.6,159.3 1138.6,157.7 1139.5,157.7 1140.5,154.1 1141.4,157.0 1142.4,156.9 1143.3,158.3 1144.3,154.2 1145.2,160.5 1146.2,157.0 1147.1,154.7 1148.1,162.3 1149.0,158.1 1150.0,160.2 1150.9,156.9 1151.9,160.6 1152.8,157.2 1153.8,156.6 1154.7,154.6 1155.7,160.8 1156.6,151.8 1157.6,157.2 1158.5,155.4 1159.5,157.6 1160.4,159.9 1161.4,159.3 1162.3,158.6 1163.3,158.1 1164.2,158.9 1165.2,160.2 1166.1,156.0 1167.1,158.6 1168.0,158.4 1169.0,159.2 1169.9,157.1 1170.9,160.6 1171.8,159.0 1172.8,156.6 1173.7,160.7 1174.7,158.1 1175.6,158.5 1176.6,165.4 1177.5,160.1 1178.5,161.3 1179.4,161.5 1180.4,158.0 1181.3,158.1 1182.3,162.5 1183.2,162.7 1184.2,150.5 1185.1,160.2 1186.1,159.0 1187.0,156.4 1188.0,158.1 1188.9,160.3 1189.9,158.7 1190.8,162.3 1191.8,163.0 1192.7,161.7 1193.7,160.1 1194.6,161.1 1195.6,160.2 1196.5,162.0 1197.5,163.1 1198.4,159.4 1199.4,158.0 1200.3,158.6 1201.3,164.8 1202.2,159.8 1203.2,157.3 1204.1,159.3 1205.1,158.7 1206.0,158.5 1207.0,159.2 1207.9,160.5 1208.9,157.4 1209.8,163.2 1210.8,156.9 1211.7,157.4 1212.7,160.0 1213.6,159.3 1214.6,161.6 1215.5,164.1 1216.5,161.9 1217.4,158.7 1218.4,159.5 1219.3,159.8 1220.3,157.8 1221.2,161.3 1222.2,160.8 1223.1,152.3 1224.1,161.9 1225.0,160.2 1226.0,160.7 1226.9,159.2 1227.9,161.0 1228.8,159.8 1229.8,155.4 1230.7,159.7 1231.7,161.2 1232.6,161.5 1233.6,159.7 1234.5,155.4 1235.5,153.8 1236.4,159.2 1237.4,166.1 1238.3,150.3 1239.3,158.2 1240.2,161.3 1241.2,155.3 1242.1,158.3 1243.1,161.5 1244.0,158.9 1245.0,163.2 1245.9,159.3 1246.9,163.5 1247.8,157.0 1248.8,160.1 1249.7,156.8 1250.7,162.3 1251.6,161.0 1252.6,161.0 1253.5,159.8 1254.5,161.4 1255.4,163.8 1256.4,161.2 1257.3,158.7 1258.3,163.4 1259.2,160.5 1260.2,163.0 1261.1,157.0 1262.1,162.9 1263.0,160.5 1264.0,162.7 1264.9,158.8 1265.9,166.5 1266.8,161.7 1267.8,159.6 1268.7,156.7 1269.7,161.1 1270.6,157.2 1271.6,158.8 1272.5,161.5 1273.5,162.0 1274.4,161.0 1275.4,160.7 1276.3,158.3 1277.3,163.3 1278.2,161.3 1279.2,157.2 1280.1,163.0 1281.1,165.3 1282.0,159.2 1283.0,164.4 1283.9,162.1 1284.9,163.5 1285.8,159.5 1286.8,162.6 1287.7,163.2 1288.7,158.8 1289.6,163.1 1290.6,164.9 1291.5,159.6 1292.5,159.0 1293.4,160.5 1294.4,159.1 1295.3,159.5 1296.3,157.3 1297.2,162.3 1298.2,160.3 1299.1,163.7 1300.1,158.2 1301.0,159.8 1302.0,167.0 1302.9,162.5 1303.9,159.3 1304.8,161.1 1305.8,159.4 1306.7,160.5 1307.7,159.8 1308.6,160.9 1309.6,165.5 1310.5,161.6 1311.5,162.5 1312.4,162.0 1313.4,160.2 1314.3,166.2 1315.3,158.0 1316.2,162.4 1317.2,162.4 1318.1,155.5 1319.1,161.4 1320.0,159.7 1321.0,162.5 1321.9,160.3 1322.9,163.6 1323.8,165.5 1324.8,162.1 1325.7,161.3 1326.7,163.3 1327.6,162.6 1328.6,166.9 1329.5,160.1 1330.5,164.4 1331.4,161.1 1332.4,163.7 1333.3,161.8 1334.3,155.0 1335.2,160.6 1336.2,167.1 1337.1,160.3 1338.1,162.9 1339.0,160.4 1340.0,163.3 1340.9,162.1 1341.9,162.9 1342.8,157.8 1343.8,163.5 1344.7,157.5 1345.7,160.3 1346.6,165.5 1347.6,163.8 1348.5,163.6 1349.5,155.6 1350.4,162.7 1351.4,164.4 1352.3,157.3 1353.3,162.9 1354.2,167.0 1355.2,161.9 1356.1,160.6 1357.1,163.3 1358.0,162.6 1359.0,163.0 1359.9,162.6 1360.9,164.6 1361.8,161.6 1362.8,165.1 1363.7,163.0 1364.7,163.0 1365.6,165.6 1366.6,162.4 1367.5,163.2 1368.5,164.8 1369.4,164.3 1370.4,164.1 1371.3,163.5 1372.3,162.6 1373.2,167.2 1374.2,164.7 1375.1,162.8 1376.1,163.4 1377.0,168.3 1378.0,158.9 1378.9,163.2 1379.9,163.8 1380.8,166.8 1381.8,166.6 1382.7,162.8 1383.7,164.2 1384.6,166.4 1385.6,165.8 1386.5,165.7 1387.5,166.0 1388.4,167.5 1389.4,165.6 1390.3,166.8 1391.3,165.8 1392.2,161.0 1393.2,159.3 1394.1,169.3 1395.1,158.2 1396.0,167.5 1397.0,167.8 1397.9,168.3 1398.9,170.1 1399.8,166.8 1400.8,167.1 1401.7,168.1 1402.7,168.1 1403.6,167.4 1404.6,168.7 1405.5,156.7 1406.5,167.0 1407.4,164.5 1408.4,166.0 1409.3,169.3 1410.3,167.9 1411.2,166.4 1412.2,167.1 1413.1,171.1 1414.1,170.5 1414.6,197.5" fill="#0f7c80" clip-path="url(#cb)"/>
<polygon points="370,197.5 370.0,166.0 370.9,167.5 371.9,164.4 372.8,164.4 373.8,163.3 374.7,168.1 375.7,168.5 376.6,165.5 377.6,167.6 378.5,167.5 379.5,162.0 380.4,168.1 381.4,164.9 382.3,167.1 383.3,165.9 384.2,165.0 385.2,165.1 386.1,171.5 387.1,165.8 388.0,166.4 389.0,165.2 389.9,169.0 390.9,168.3 391.8,165.5 392.8,169.8 393.7,169.0 394.7,161.1 395.6,167.1 396.6,159.0 397.5,168.7 398.5,167.8 399.4,162.8 400.4,167.2 401.3,165.9 402.3,160.7 403.2,165.4 404.2,168.9 405.1,169.1 406.1,166.9 407.0,162.3 408.0,162.3 408.9,165.6 409.9,166.1 410.8,169.9 411.8,165.3 412.7,165.4 413.7,169.6 414.6,158.3 415.6,165.2 416.5,161.0 417.5,168.0 418.4,165.8 419.4,165.5 420.3,164.6 421.3,166.2 422.2,164.2 423.2,167.0 424.1,162.5 425.1,166.2 426.0,165.7 427.0,161.4 427.9,167.0 428.9,165.7 429.8,166.7 430.8,162.7 431.7,165.7 432.7,165.9 433.6,162.1 434.6,166.8 435.5,160.3 436.5,165.5 437.4,165.9 438.4,167.4 439.3,160.2 440.3,169.9 441.2,165.3 442.2,167.2 443.1,162.1 444.1,163.4 445.0,163.8 446.0,162.1 446.9,165.1 447.9,157.9 448.8,167.5 449.8,165.3 450.7,166.2 451.7,161.1 452.6,163.0 453.6,164.4 454.5,161.8 455.5,162.3 456.4,162.5 457.4,159.4 458.3,164.5 459.3,159.6 460.2,162.1 461.2,159.8 462.1,164.2 463.1,165.3 464.0,166.0 465.0,164.4 465.9,168.0 466.9,164.4 467.8,165.0 468.8,163.2 469.7,159.0 470.7,155.1 471.6,161.5 472.6,158.6 473.5,163.9 474.5,159.2 475.4,164.8 476.4,157.4 477.3,161.5 478.3,166.7 479.2,158.7 480.2,166.1 481.1,164.1 482.1,162.4 483.0,163.4 484.0,163.6 484.9,162.7 485.9,163.6 486.8,156.8 487.8,161.0 488.7,161.7 489.7,160.1 490.6,162.9 491.6,163.7 492.5,161.7 493.5,161.5 494.4,162.3 495.4,162.2 496.3,162.4 497.3,161.7 498.2,163.2 499.2,166.5 500.1,160.3 501.1,161.4 502.0,161.5 503.0,161.2 503.9,163.4 504.9,160.8 505.8,162.6 506.8,160.4 507.7,157.4 508.7,154.9 509.6,158.4 510.6,160.7 511.5,157.6 512.5,162.2 513.4,157.6 514.4,161.0 515.3,161.4 516.3,158.4 517.2,163.4 518.2,160.7 519.1,153.0 520.1,160.7 521.0,161.4 522.0,162.8 522.9,160.2 523.9,155.4 524.8,158.7 525.8,156.9 526.7,162.7 527.7,159.4 528.6,157.7 529.6,163.3 530.5,165.9 531.5,162.4 532.4,155.7 533.4,160.8 534.3,162.6 535.3,161.1 536.2,158.0 537.2,155.1 538.1,160.0 539.1,161.0 540.0,155.7 541.0,160.4 541.9,159.0 542.9,158.5 543.8,161.1 544.8,159.6 545.7,160.3 546.7,159.6 547.6,161.1 548.6,162.2 549.6,157.2 550.5,159.4 551.5,158.8 552.4,159.3 553.4,160.0 554.3,158.4 555.3,162.3 556.2,157.5 557.2,158.5 558.1,157.8 559.1,159.2 560.0,159.4 561.0,159.8 561.9,155.4 562.9,157.3 563.8,154.1 564.8,160.1 565.7,156.2 566.7,158.8 567.6,157.1 568.6,162.0 569.5,157.7 570.5,150.7 571.4,161.8 572.4,157.0 573.3,159.9 574.3,160.4 575.2,162.3 576.2,156.4 577.1,157.4 578.1,157.1 579.0,158.9 580.0,158.8 580.9,158.0 581.9,158.1 582.8,159.8 583.8,156.7 584.7,158.0 585.7,158.4 586.6,158.6 587.6,154.2 588.5,159.0 589.5,161.1 590.4,156.6 591.4,161.1 592.3,159.9 593.3,157.1 594.2,158.7 595.2,157.4 596.1,158.3 597.1,157.8 598.0,162.0 599.0,157.5 599.9,160.3 600.9,158.1 601.8,159.0 602.8,157.5 603.7,158.0 604.7,162.2 605.6,154.5 606.6,163.4 607.5,156.1 608.5,148.3 609.4,157.4 610.4,160.6 611.3,156.4 612.3,160.0 613.2,162.3 614.2,156.2 615.1,159.3 616.1,157.0 617.0,158.9 618.0,160.6 618.9,143.5 619.9,138.8 620.8,154.4 621.8,156.1 622.7,161.4 623.7,154.1 624.6,154.5 625.6,157.5 626.5,156.1 627.5,154.7 628.4,156.8 629.4,159.9 630.3,157.5 631.3,158.6 632.2,159.8 633.2,157.4 634.1,159.2 635.1,161.4 636.0,158.4 637.0,158.3 637.9,158.9 638.9,156.0 639.8,155.3 640.8,156.0 641.7,157.4 642.7,156.3 643.6,157.0 644.6,156.4 645.5,158.3 646.5,157.8 647.4,159.0 648.4,160.0 649.3,156.6 650.3,159.8 651.2,156.7 652.2,152.3 653.1,154.4 654.1,159.1 655.0,159.9 656.0,152.7 656.9,156.0 657.9,159.1 658.8,159.2 659.8,158.9 660.7,166.2 661.7,155.7 662.6,154.9 663.6,133.4 664.5,137.4 665.5,154.6 666.4,156.8 667.4,161.3 668.3,157.5 669.3,157.0 670.2,156.4 671.2,156.3 672.1,150.6 673.1,158.2 674.0,157.8 675.0,154.2 675.9,154.6 676.9,162.2 677.8,160.2 678.8,154.5 679.7,154.1 680.7,160.7 681.6,158.0 682.6,156.4 683.5,159.2 684.5,160.4 685.4,159.7 686.4,160.9 687.3,158.6 688.3,159.2 689.2,159.9 690.2,161.3 691.1,159.3 692.1,159.0 693.0,154.1 694.0,155.6 694.9,157.9 695.9,156.1 696.8,160.0 697.8,157.9 698.7,160.0 699.7,154.6 700.6,159.1 701.6,159.6 702.5,155.4 703.5,160.2 704.4,156.7 705.4,158.6 706.3,156.5 707.3,157.7 708.2,155.0 709.2,157.9 710.1,155.9 711.1,156.8 712.0,152.9 713.0,161.6 713.9,155.9 714.9,158.7 715.8,158.3 716.8,160.0 717.7,150.9 718.7,159.0 719.6,156.0 720.6,139.3 721.5,142.3 722.5,156.7 723.4,159.2 724.4,155.0 725.3,156.0 726.3,157.3 727.2,159.0 728.2,157.6 729.1,155.7 730.1,161.0 731.0,156.5 732.0,154.9 732.9,158.8 733.9,155.9 734.8,157.0 735.8,154.0 736.7,161.2 737.7,156.7 738.6,151.6 739.6,154.6 740.5,153.2 741.5,153.9 742.4,162.2 743.4,158.3 744.3,158.7 745.3,149.6 746.2,160.5 747.2,159.1 748.1,156.4 749.1,158.7 750.0,159.4 751.0,157.9 751.9,156.2 752.9,157.2 753.8,158.8 754.8,153.0 755.7,154.1 756.7,157.7 757.6,157.2 758.6,162.1 759.5,153.9 760.5,159.2 761.4,156.3 762.4,156.2 763.3,157.8 764.3,157.2 765.2,154.6 766.2,160.2 767.1,157.6 768.1,154.8 769.0,155.9 770.0,154.8 770.9,159.0 771.9,159.0 772.8,156.4 773.8,154.0 774.7,156.4 775.7,157.3 776.6,161.4 777.6,160.4 778.5,157.3 779.5,155.5 780.4,157.1 781.4,157.8 782.3,156.1 783.3,155.9 784.2,159.2 785.2,156.4 786.1,156.8 787.1,153.6 788.0,156.2 789.0,151.7 789.9,158.1 790.9,154.6 791.8,156.1 792.8,156.2 793.7,157.8 794.7,151.0 795.6,159.3 796.6,160.3 797.5,154.6 798.5,156.7 799.4,153.6 800.4,160.0 801.3,164.0 802.3,164.2 803.2,154.9 804.2,158.9 805.1,159.7 806.1,156.6 807.0,159.8 808.0,159.9 808.9,158.2 809.9,162.3 810.8,155.9 811.8,157.8 812.7,158.4 813.7,156.3 814.6,160.5 815.6,157.6 816.5,155.1 817.5,158.7 818.4,160.8 819.4,158.8 820.3,151.0 821.3,157.3 822.2,158.3 823.2,158.1 824.1,160.3 825.1,155.6 826.0,155.5 827.0,154.0 827.9,154.4 828.9,156.9 829.8,160.5 830.8,158.5 831.7,158.8 832.7,157.5 833.6,155.7 834.6,154.4 835.5,150.8 836.5,155.5 837.4,154.9 838.4,165.6 839.3,156.3 840.3,156.3 841.2,157.7 842.2,156.2 843.1,156.6 844.1,160.9 845.0,160.2 846.0,157.1 846.9,158.6 847.9,156.1 848.8,155.8 849.8,158.0 850.7,155.7 851.7,154.7 852.6,156.7 853.6,155.1 854.5,161.1 855.5,156.6 856.4,155.1 857.4,160.1 858.3,156.0 859.3,161.4 860.2,158.4 861.2,157.7 862.1,159.4 863.1,157.7 864.0,156.7 865.0,160.0 865.9,157.1 866.9,156.6 867.8,160.5 868.8,161.4 869.7,156.7 870.7,153.9 871.6,153.2 872.6,160.6 873.5,151.7 874.5,154.7 875.4,154.9 876.4,155.8 877.3,157.0 878.3,156.5 879.2,155.9 880.2,158.4 881.1,157.3 882.1,158.1 883.0,153.4 884.0,154.3 884.9,158.9 885.9,156.3 886.8,157.5 887.8,157.6 888.7,157.9 889.7,157.1 890.6,156.9 891.6,142.3 892.5,124.4 893.5,142.3 894.4,157.8 895.4,160.1 896.3,157.5 897.3,154.1 898.2,157.8 899.2,160.0 900.1,156.5 901.1,156.9 902.0,116.9 903.0,103.3 903.9,148.5 904.9,158.2 905.8,153.6 906.8,159.5 907.7,155.1 908.7,157.8 909.6,158.0 910.6,150.8 911.5,153.2 912.5,156.1 913.4,145.5 914.4,148.0 915.3,159.0 916.3,157.3 917.2,156.0 918.2,158.9 919.1,159.1 920.1,158.0 921.0,160.9 922.0,160.9 922.9,157.8 923.9,153.2 924.8,159.0 925.8,158.7 926.7,161.2 927.7,162.6 928.6,158.5 929.6,162.1 930.5,161.3 931.5,160.2 932.4,158.7 933.4,159.2 934.3,155.8 935.3,134.6 936.2,138.5 937.2,156.8 938.1,162.3 939.1,157.3 940.0,156.3 941.0,158.0 941.9,158.5 942.9,161.2 943.8,150.7 944.8,162.9 945.7,161.4 946.7,157.9 947.6,158.3 948.6,160.3 949.5,153.2 950.5,158.6 951.4,158.6 952.4,160.4 953.3,160.7 954.3,153.4 955.2,156.1 956.2,154.9 957.1,154.1 958.1,158.5 959.0,161.9 960.0,159.5 960.9,160.1 961.9,160.0 962.8,149.7 963.8,160.1 964.7,159.6 965.7,157.8 966.6,161.3 967.6,158.9 968.5,160.6 969.5,158.3 970.4,157.1 971.4,155.8 972.3,157.9 973.3,159.0 974.2,159.5 975.2,160.0 976.1,156.6 977.1,159.4 978.0,158.4 979.0,156.4 979.9,159.5 980.9,149.6 981.8,162.4 982.8,157.0 983.7,157.4 984.7,154.9 985.6,161.4 986.6,157.5 987.5,158.5 988.5,157.8 989.4,154.0 990.4,157.0 991.3,159.7 992.3,157.7 993.2,160.4 994.2,157.6 995.1,158.9 996.1,158.9 997.0,160.3 998.0,159.5 998.9,159.1 999.9,161.1 1000.8,157.7 1001.8,159.6 1002.7,160.0 1003.7,158.4 1004.6,157.1 1005.6,163.8 1006.5,155.7 1007.5,156.8 1008.4,159.4 1009.4,159.2 1010.3,156.6 1011.3,160.6 1012.2,158.1 1013.2,155.2 1014.1,162.7 1015.1,157.9 1016.0,160.8 1017.0,157.8 1017.9,156.9 1018.9,159.8 1019.8,156.6 1020.8,157.8 1021.7,157.3 1022.7,158.8 1023.6,162.1 1024.6,160.7 1025.5,161.1 1026.5,160.4 1027.4,161.3 1028.4,156.9 1029.3,157.7 1030.3,156.7 1031.2,153.5 1032.2,156.4 1033.1,155.0 1034.1,156.8 1035.0,160.3 1036.0,158.5 1036.9,162.0 1037.9,158.1 1038.8,161.0 1039.8,153.3 1040.7,156.3 1041.7,158.4 1042.6,157.7 1043.6,163.4 1044.5,158.5 1045.5,158.4 1046.4,159.3 1047.4,160.7 1048.3,161.1 1049.3,158.6 1050.2,159.3 1051.2,159.2 1052.1,153.3 1053.1,158.0 1054.0,158.0 1055.0,159.6 1055.9,161.2 1056.9,160.4 1057.8,160.1 1058.8,159.7 1059.7,161.5 1060.7,156.6 1061.6,160.1 1062.6,158.3 1063.5,160.3 1064.5,157.2 1065.4,160.7 1066.4,163.4 1067.3,154.3 1068.3,160.0 1069.2,158.8 1070.2,154.9 1071.1,158.2 1072.1,159.7 1073.0,160.2 1074.0,160.3 1074.9,158.5 1075.9,157.0 1076.8,159.1 1077.8,160.9 1078.7,157.3 1079.7,157.9 1080.6,160.5 1081.6,160.5 1082.5,157.5 1083.5,153.6 1084.4,159.9 1085.4,157.5 1086.3,153.6 1087.3,158.9 1088.2,158.6 1089.2,157.4 1090.1,162.9 1091.1,158.2 1092.0,156.6 1093.0,160.4 1093.9,158.1 1094.9,158.1 1095.8,159.5 1096.8,159.1 1097.7,160.6 1098.7,159.4 1099.6,158.7 1100.6,161.2 1101.5,153.4 1102.5,160.0 1103.4,161.6 1104.4,161.2 1105.3,158.4 1106.3,157.3 1107.2,161.0 1108.2,158.4 1109.1,152.4 1110.1,157.6 1111.0,163.4 1112.0,158.7 1112.9,154.3 1113.9,160.4 1114.8,158.1 1115.8,159.8 1116.7,159.3 1117.7,160.6 1118.6,158.0 1119.6,163.0 1120.5,156.1 1121.5,158.3 1122.4,159.6 1123.4,155.7 1124.3,160.7 1125.3,159.8 1126.2,158.3 1127.2,158.6 1128.1,157.1 1129.1,159.1 1130.0,161.0 1131.0,164.5 1131.9,157.7 1132.9,157.2 1133.8,159.6 1134.8,159.7 1135.7,157.0 1136.7,156.6 1137.6,159.3 1138.6,157.7 1139.5,157.7 1140.5,154.1 1141.4,157.0 1142.4,156.9 1143.3,158.3 1144.3,154.2 1145.2,160.5 1146.2,157.0 1147.1,154.7 1148.1,162.3 1149.0,158.1 1150.0,160.2 1150.9,156.9 1151.9,160.6 1152.8,157.2 1153.8,156.6 1154.7,154.6 1155.7,160.8 1156.6,151.8 1157.6,157.2 1158.5,155.4 1159.5,157.6 1160.4,159.9 1161.4,159.3 1162.3,158.6 1163.3,158.1 1164.2,158.9 1165.2,160.2 1166.1,156.0 1167.1,158.6 1168.0,158.4 1169.0,159.2 1169.9,157.1 1170.9,160.6 1171.8,159.0 1172.8,156.6 1173.7,160.7 1174.7,158.1 1175.6,158.5 1176.6,165.4 1177.5,160.1 1178.5,161.3 1179.4,161.5 1180.4,158.0 1181.3,158.1 1182.3,162.5 1183.2,162.7 1184.2,150.5 1185.1,160.2 1186.1,159.0 1187.0,156.4 1188.0,158.1 1188.9,160.3 1189.9,158.7 1190.8,162.3 1191.8,163.0 1192.7,161.7 1193.7,160.1 1194.6,161.1 1195.6,160.2 1196.5,162.0 1197.5,163.1 1198.4,159.4 1199.4,158.0 1200.3,158.6 1201.3,164.8 1202.2,159.8 1203.2,157.3 1204.1,159.3 1205.1,158.7 1206.0,158.5 1207.0,159.2 1207.9,160.5 1208.9,157.4 1209.8,163.2 1210.8,156.9 1211.7,157.4 1212.7,160.0 1213.6,159.3 1214.6,161.6 1215.5,164.1 1216.5,161.9 1217.4,158.7 1218.4,159.5 1219.3,159.8 1220.3,157.8 1221.2,161.3 1222.2,160.8 1223.1,152.3 1224.1,161.9 1225.0,160.2 1226.0,160.7 1226.9,159.2 1227.9,161.0 1228.8,159.8 1229.8,155.4 1230.7,159.7 1231.7,161.2 1232.6,161.5 1233.6,159.7 1234.5,155.4 1235.5,153.8 1236.4,159.2 1237.4,166.1 1238.3,150.3 1239.3,158.2 1240.2,161.3 1241.2,155.3 1242.1,158.3 1243.1,161.5 1244.0,158.9 1245.0,163.2 1245.9,159.3 1246.9,163.5 1247.8,157.0 1248.8,160.1 1249.7,156.8 1250.7,162.3 1251.6,161.0 1252.6,161.0 1253.5,159.8 1254.5,161.4 1255.4,163.8 1256.4,161.2 1257.3,158.7 1258.3,163.4 1259.2,160.5 1260.2,163.0 1261.1,157.0 1262.1,162.9 1263.0,160.5 1264.0,162.7 1264.9,158.8 1265.9,166.5 1266.8,161.7 1267.8,159.6 1268.7,156.7 1269.7,161.1 1270.6,157.2 1271.6,158.8 1272.5,161.5 1273.5,162.0 1274.4,161.0 1275.4,160.7 1276.3,158.3 1277.3,163.3 1278.2,161.3 1279.2,157.2 1280.1,163.0 1281.1,165.3 1282.0,159.2 1283.0,164.4 1283.9,162.1 1284.9,163.5 1285.8,159.5 1286.8,162.6 1287.7,163.2 1288.7,158.8 1289.6,163.1 1290.6,164.9 1291.5,159.6 1292.5,159.0 1293.4,160.5 1294.4,159.1 1295.3,159.5 1296.3,157.3 1297.2,162.3 1298.2,160.3 1299.1,163.7 1300.1,158.2 1301.0,159.8 1302.0,167.0 1302.9,162.5 1303.9,159.3 1304.8,161.1 1305.8,159.4 1306.7,160.5 1307.7,159.8 1308.6,160.9 1309.6,165.5 1310.5,161.6 1311.5,162.5 1312.4,162.0 1313.4,160.2 1314.3,166.2 1315.3,158.0 1316.2,162.4 1317.2,162.4 1318.1,155.5 1319.1,161.4 1320.0,159.7 1321.0,162.5 1321.9,160.3 1322.9,163.6 1323.8,165.5 1324.8,162.1 1325.7,161.3 1326.7,163.3 1327.6,162.6 1328.6,166.9 1329.5,160.1 1330.5,164.4 1331.4,161.1 1332.4,163.7 1333.3,161.8 1334.3,155.0 1335.2,160.6 1336.2,167.1 1337.1,160.3 1338.1,162.9 1339.0,160.4 1340.0,163.3 1340.9,162.1 1341.9,162.9 1342.8,157.8 1343.8,163.5 1344.7,157.5 1345.7,160.3 1346.6,165.5 1347.6,163.8 1348.5,163.6 1349.5,155.6 1350.4,162.7 1351.4,164.4 1352.3,157.3 1353.3,162.9 1354.2,167.0 1355.2,161.9 1356.1,160.6 1357.1,163.3 1358.0,162.6 1359.0,163.0 1359.9,162.6 1360.9,164.6 1361.8,161.6 1362.8,165.1 1363.7,163.0 1364.7,163.0 1365.6,165.6 1366.6,162.4 1367.5,163.2 1368.5,164.8 1369.4,164.3 1370.4,164.1 1371.3,163.5 1372.3,162.6 1373.2,167.2 1374.2,164.7 1375.1,162.8 1376.1,163.4 1377.0,168.3 1378.0,158.9 1378.9,163.2 1379.9,163.8 1380.8,166.8 1381.8,166.6 1382.7,162.8 1383.7,164.2 1384.6,166.4 1385.6,165.8 1386.5,165.7 1387.5,166.0 1388.4,167.5 1389.4,165.6 1390.3,166.8 1391.3,165.8 1392.2,161.0 1393.2,159.3 1394.1,169.3 1395.1,158.2 1396.0,167.5 1397.0,167.8 1397.9,168.3 1398.9,170.1 1399.8,166.8 1400.8,167.1 1401.7,168.1 1402.7,168.1 1403.6,167.4 1404.6,168.7 1405.5,156.7 1406.5,167.0 1407.4,164.5 1408.4,166.0 1409.3,169.3 1410.3,167.9 1411.2,166.4 1412.2,167.1 1413.1,171.1 1414.1,170.5 1414.6,197.5" fill="#172a30" clip-path="url(#co)"/>
<line x1="370" y1="113.4" x2="1414.6" y2="113.4" stroke="rgba(255,255,255,0.2)" stroke-width="1.2"/>
<line x1="370" y1="145.8" x2="1414.6" y2="145.8" stroke="rgba(255,255,255,0.2)" stroke-width="1.2"/>
<line x1="370" y1="178.2" x2="1414.6" y2="178.2" stroke="rgba(255,255,255,0.2)" stroke-width="1.2"/>
<line x1="435.3" y1="93" x2="435.3" y2="197.5" stroke="rgba(255,255,255,0.2)" stroke-width="1.2"/>
<line x1="435.3" y1="197.5" x2="435.3" y2="204.6" stroke="#cfcfcf" stroke-width="1.3"/>
<line x1="522.3" y1="93" x2="522.3" y2="197.5" stroke="rgba(255,255,255,0.2)" stroke-width="1.2"/>
<line x1="522.3" y1="197.5" x2="522.3" y2="204.6" stroke="#cfcfcf" stroke-width="1.3"/>
<line x1="609.3" y1="93" x2="609.3" y2="197.5" stroke="rgba(255,255,255,0.2)" stroke-width="1.2"/>
<line x1="609.3" y1="197.5" x2="609.3" y2="204.6" stroke="#cfcfcf" stroke-width="1.3"/>
<line x1="696.3" y1="93" x2="696.3" y2="197.5" stroke="rgba(255,255,255,0.2)" stroke-width="1.2"/>
<line x1="696.3" y1="197.5" x2="696.3" y2="204.6" stroke="#cfcfcf" stroke-width="1.3"/>
<line x1="783.3" y1="93" x2="783.3" y2="197.5" stroke="rgba(255,255,255,0.2)" stroke-width="1.2"/>
<line x1="783.3" y1="197.5" x2="783.3" y2="204.6" stroke="#cfcfcf" stroke-width="1.3"/>
<line x1="870.3" y1="93" x2="870.3" y2="197.5" stroke="rgba(255,255,255,0.2)" stroke-width="1.2"/>
<line x1="870.3" y1="197.5" x2="870.3" y2="204.6" stroke="#cfcfcf" stroke-width="1.3"/>
<line x1="957.3" y1="93" x2="957.3" y2="197.5" stroke="rgba(255,255,255,0.2)" stroke-width="1.2"/>
<line x1="957.3" y1="197.5" x2="957.3" y2="204.6" stroke="#cfcfcf" stroke-width="1.3"/>
<line x1="1044.3" y1="93" x2="1044.3" y2="197.5" stroke="rgba(255,255,255,0.2)" stroke-width="1.2"/>
<line x1="1044.3" y1="197.5" x2="1044.3" y2="204.6" stroke="#cfcfcf" stroke-width="1.3"/>
<line x1="1131.3" y1="93" x2="1131.3" y2="197.5" stroke="rgba(255,255,255,0.2)" stroke-width="1.2"/>
<line x1="1131.3" y1="197.5" x2="1131.3" y2="204.6" stroke="#cfcfcf" stroke-width="1.3"/>
<line x1="1218.3" y1="93" x2="1218.3" y2="197.5" stroke="rgba(255,255,255,0.2)" stroke-width="1.2"/>
<line x1="1218.3" y1="197.5" x2="1218.3" y2="204.6" stroke="#cfcfcf" stroke-width="1.3"/>
<line x1="1305.3" y1="93" x2="1305.3" y2="197.5" stroke="rgba(255,255,255,0.2)" stroke-width="1.2"/>
<line x1="1305.3" y1="197.5" x2="1305.3" y2="204.6" stroke="#cfcfcf" stroke-width="1.3"/>
<line x1="1392.3" y1="93" x2="1392.3" y2="197.5" stroke="rgba(255,255,255,0.2)" stroke-width="1.2"/>
<line x1="1392.3" y1="197.5" x2="1392.3" y2="204.6" stroke="#cfcfcf" stroke-width="1.3"/>
<polyline points="370.0,166.0 370.9,167.5 371.9,164.4 372.8,164.4 373.8,163.3 374.7,168.1 375.7,168.5 376.6,165.5 377.6,167.6 378.5,167.5 379.5,162.0 380.4,168.1 381.4,164.9 382.3,167.1 383.3,165.9 384.2,165.0 385.2,165.1 386.1,171.5 387.1,165.8 388.0,166.4 389.0,165.2 389.9,169.0 390.9,168.3 391.8,165.5 392.8,169.8 393.7,169.0 394.7,161.1 395.6,167.1 396.6,159.0 397.5,168.7 398.5,167.8 399.4,162.8 400.4,167.2 401.3,165.9 402.3,160.7 403.2,165.4 404.2,168.9 405.1,169.1 406.1,166.9 407.0,162.3 408.0,162.3 408.9,165.6 409.9,166.1 410.8,169.9 411.8,165.3 412.7,165.4 413.7,169.6 414.6,158.3 415.6,165.2 416.5,161.0 417.5,168.0 418.4,165.8 419.4,165.5 420.3,164.6 421.3,166.2 422.2,164.2 423.2,167.0 424.1,162.5 425.1,166.2 426.0,165.7 427.0,161.4 427.9,167.0 428.9,165.7 429.8,166.7 430.8,162.7 431.7,165.7 432.7,165.9 433.6,162.1 434.6,166.8 435.5,160.3 436.5,165.5 437.4,165.9 438.4,167.4 439.3,160.2 440.3,169.9 441.2,165.3 442.2,167.2 443.1,162.1 444.1,163.4 445.0,163.8 446.0,162.1 446.9,165.1 447.9,157.9 448.8,167.5 449.8,165.3 450.7,166.2 451.7,161.1 452.6,163.0 453.6,164.4 454.5,161.8 455.5,162.3 456.4,162.5 457.4,159.4 458.3,164.5 459.3,159.6 460.2,162.1 461.2,159.8 462.1,164.2 463.1,165.3 464.0,166.0 465.0,164.4 465.9,168.0 466.9,164.4 467.8,165.0 468.8,163.2 469.7,159.0 470.7,155.1 471.6,161.5 472.6,158.6 473.5,163.9 474.5,159.2 475.4,164.8 476.4,157.4 477.3,161.5 478.3,166.7 479.2,158.7 480.2,166.1 481.1,164.1 482.1,162.4 483.0,163.4 484.0,163.6 484.9,162.7 485.9,163.6 486.8,156.8 487.8,161.0 488.7,161.7 489.7,160.1 490.6,162.9 491.6,163.7 492.5,161.7 493.5,161.5 494.4,162.3 495.4,162.2 496.3,162.4 497.3,161.7 498.2,163.2 499.2,166.5 500.1,160.3 501.1,161.4 502.0,161.5 503.0,161.2 503.9,163.4 504.9,160.8 505.8,162.6 506.8,160.4 507.7,157.4 508.7,154.9 509.6,158.4 510.6,160.7 511.5,157.6 512.5,162.2 513.4,157.6 514.4,161.0 515.3,161.4 516.3,158.4 517.2,163.4 518.2,160.7 519.1,153.0 520.1,160.7 521.0,161.4 522.0,162.8 522.9,160.2 523.9,155.4 524.8,158.7 525.8,156.9 526.7,162.7 527.7,159.4 528.6,157.7 529.6,163.3 530.5,165.9 531.5,162.4 532.4,155.7 533.4,160.8 534.3,162.6 535.3,161.1 536.2,158.0 537.2,155.1 538.1,160.0 539.1,161.0 540.0,155.7 541.0,160.4 541.9,159.0 542.9,158.5 543.8,161.1 544.8,159.6 545.7,160.3 546.7,159.6 547.6,161.1 548.6,162.2 549.6,157.2 550.5,159.4 551.5,158.8 552.4,159.3 553.4,160.0 554.3,158.4 555.3,162.3 556.2,157.5 557.2,158.5 558.1,157.8 559.1,159.2 560.0,159.4 561.0,159.8 561.9,155.4 562.9,157.3 563.8,154.1 564.8,160.1 565.7,156.2 566.7,158.8 567.6,157.1 568.6,162.0 569.5,157.7 570.5,150.7 571.4,161.8 572.4,157.0 573.3,159.9 574.3,160.4 575.2,162.3 576.2,156.4 577.1,157.4 578.1,157.1 579.0,158.9 580.0,158.8 580.9,158.0 581.9,158.1 582.8,159.8 583.8,156.7 584.7,158.0 585.7,158.4 586.6,158.6 587.6,154.2 588.5,159.0 589.5,161.1 590.4,156.6 591.4,161.1 592.3,159.9 593.3,157.1 594.2,158.7 595.2,157.4 596.1,158.3 597.1,157.8 598.0,162.0 599.0,157.5 599.9,160.3 600.9,158.1 601.8,159.0 602.8,157.5 603.7,158.0 604.7,162.2 605.6,154.5 606.6,163.4 607.5,156.1 608.5,148.3 609.4,157.4 610.4,160.6 611.3,156.4 612.3,160.0 613.2,162.3 614.2,156.2 615.1,159.3 616.1,157.0 617.0,158.9 618.0,160.6 618.9,143.5 619.9,138.8 620.8,154.4 621.8,156.1 622.7,161.4 623.7,154.1 624.6,154.5 625.6,157.5 626.5,156.1 627.5,154.7 628.4,156.8 629.4,159.9 630.3,157.5 631.3,158.6 632.2,159.8 633.2,157.4 634.1,159.2 635.1,161.4 636.0,158.4 637.0,158.3 637.9,158.9 638.9,156.0 639.8,155.3 640.8,156.0 641.7,157.4 642.7,156.3 643.6,157.0 644.6,156.4 645.5,158.3 646.5,157.8 647.4,159.0 648.4,160.0 649.3,156.6 650.3,159.8 651.2,156.7 652.2,152.3 653.1,154.4 654.1,159.1 655.0,159.9 656.0,152.7 656.9,156.0 657.9,159.1 658.8,159.2 659.8,158.9 660.7,166.2 661.7,155.7 662.6,154.9 663.6,133.4 664.5,137.4 665.5,154.6 666.4,156.8 667.4,161.3 668.3,157.5 669.3,157.0 670.2,156.4 671.2,156.3 672.1,150.6 673.1,158.2 674.0,157.8 675.0,154.2 675.9,154.6 676.9,162.2 677.8,160.2 678.8,154.5 679.7,154.1 680.7,160.7 681.6,158.0 682.6,156.4 683.5,159.2 684.5,160.4 685.4,159.7 686.4,160.9 687.3,158.6 688.3,159.2 689.2,159.9 690.2,161.3 691.1,159.3 692.1,159.0 693.0,154.1 694.0,155.6 694.9,157.9 695.9,156.1 696.8,160.0 697.8,157.9 698.7,160.0 699.7,154.6 700.6,159.1 701.6,159.6 702.5,155.4 703.5,160.2 704.4,156.7 705.4,158.6 706.3,156.5 707.3,157.7 708.2,155.0 709.2,157.9 710.1,155.9 711.1,156.8 712.0,152.9 713.0,161.6 713.9,155.9 714.9,158.7 715.8,158.3 716.8,160.0 717.7,150.9 718.7,159.0 719.6,156.0 720.6,139.3 721.5,142.3 722.5,156.7 723.4,159.2 724.4,155.0 725.3,156.0 726.3,157.3 727.2,159.0 728.2,157.6 729.1,155.7 730.1,161.0 731.0,156.5 732.0,154.9 732.9,158.8 733.9,155.9 734.8,157.0 735.8,154.0 736.7,161.2 737.7,156.7 738.6,151.6 739.6,154.6 740.5,153.2 741.5,153.9 742.4,162.2 743.4,158.3 744.3,158.7 745.3,149.6 746.2,160.5 747.2,159.1 748.1,156.4 749.1,158.7 750.0,159.4 751.0,157.9 751.9,156.2 752.9,157.2 753.8,158.8 754.8,153.0 755.7,154.1 756.7,157.7 757.6,157.2 758.6,162.1 759.5,153.9 760.5,159.2 761.4,156.3 762.4,156.2 763.3,157.8 764.3,157.2 765.2,154.6 766.2,160.2 767.1,157.6 768.1,154.8 769.0,155.9 770.0,154.8 770.9,159.0 771.9,159.0 772.8,156.4 773.8,154.0 774.7,156.4 775.7,157.3 776.6,161.4 777.6,160.4 778.5,157.3 779.5,155.5 780.4,157.1 781.4,157.8 782.3,156.1 783.3,155.9 784.2,159.2 785.2,156.4 786.1,156.8 787.1,153.6 788.0,156.2 789.0,151.7 789.9,158.1 790.9,154.6 791.8,156.1 792.8,156.2 793.7,157.8 794.7,151.0 795.6,159.3 796.6,160.3 797.5,154.6 798.5,156.7 799.4,153.6 800.4,160.0 801.3,164.0 802.3,164.2 803.2,154.9 804.2,158.9 805.1,159.7 806.1,156.6 807.0,159.8 808.0,159.9 808.9,158.2 809.9,162.3 810.8,155.9 811.8,157.8 812.7,158.4 813.7,156.3 814.6,160.5 815.6,157.6 816.5,155.1 817.5,158.7 818.4,160.8 819.4,158.8 820.3,151.0 821.3,157.3 822.2,158.3 823.2,158.1 824.1,160.3 825.1,155.6 826.0,155.5 827.0,154.0 827.9,154.4 828.9,156.9 829.8,160.5 830.8,158.5 831.7,158.8 832.7,157.5 833.6,155.7 834.6,154.4 835.5,150.8 836.5,155.5 837.4,154.9 838.4,165.6 839.3,156.3 840.3,156.3 841.2,157.7 842.2,156.2 843.1,156.6 844.1,160.9 845.0,160.2 846.0,157.1 846.9,158.6 847.9,156.1 848.8,155.8 849.8,158.0 850.7,155.7 851.7,154.7 852.6,156.7 853.6,155.1 854.5,161.1 855.5,156.6 856.4,155.1 857.4,160.1 858.3,156.0 859.3,161.4 860.2,158.4 861.2,157.7 862.1,159.4 863.1,157.7 864.0,156.7 865.0,160.0 865.9,157.1 866.9,156.6 867.8,160.5 868.8,161.4 869.7,156.7 870.7,153.9 871.6,153.2 872.6,160.6 873.5,151.7 874.5,154.7 875.4,154.9 876.4,155.8 877.3,157.0 878.3,156.5 879.2,155.9 880.2,158.4 881.1,157.3 882.1,158.1 883.0,153.4 884.0,154.3 884.9,158.9 885.9,156.3 886.8,157.5 887.8,157.6 888.7,157.9 889.7,157.1 890.6,156.9 891.6,142.3 892.5,124.4 893.5,142.3 894.4,157.8 895.4,160.1 896.3,157.5 897.3,154.1 898.2,157.8 899.2,160.0 900.1,156.5 901.1,156.9 902.0,116.9 903.0,103.3 903.9,148.5 904.9,158.2 905.8,153.6 906.8,159.5 907.7,155.1 908.7,157.8 909.6,158.0 910.6,150.8 911.5,153.2 912.5,156.1 913.4,145.5 914.4,148.0 915.3,159.0 916.3,157.3 917.2,156.0 918.2,158.9 919.1,159.1 920.1,158.0 921.0,160.9 922.0,160.9 922.9,157.8 923.9,153.2 924.8,159.0 925.8,158.7 926.7,161.2 927.7,162.6 928.6,158.5 929.6,162.1 930.5,161.3 931.5,160.2 932.4,158.7 933.4,159.2 934.3,155.8 935.3,134.6 936.2,138.5 937.2,156.8 938.1,162.3 939.1,157.3 940.0,156.3 941.0,158.0 941.9,158.5 942.9,161.2 943.8,150.7 944.8,162.9 945.7,161.4 946.7,157.9 947.6,158.3 948.6,160.3 949.5,153.2 950.5,158.6 951.4,158.6 952.4,160.4 953.3,160.7 954.3,153.4 955.2,156.1 956.2,154.9 957.1,154.1 958.1,158.5 959.0,161.9 960.0,159.5 960.9,160.1 961.9,160.0 962.8,149.7 963.8,160.1 964.7,159.6 965.7,157.8 966.6,161.3 967.6,158.9 968.5,160.6 969.5,158.3 970.4,157.1 971.4,155.8 972.3,157.9 973.3,159.0 974.2,159.5 975.2,160.0 976.1,156.6 977.1,159.4 978.0,158.4 979.0,156.4 979.9,159.5 980.9,149.6 981.8,162.4 982.8,157.0 983.7,157.4 984.7,154.9 985.6,161.4 986.6,157.5 987.5,158.5 988.5,157.8 989.4,154.0 990.4,157.0 991.3,159.7 992.3,157.7 993.2,160.4 994.2,157.6 995.1,158.9 996.1,158.9 997.0,160.3 998.0,159.5 998.9,159.1 999.9,161.1 1000.8,157.7 1001.8,159.6 1002.7,160.0 1003.7,158.4 1004.6,157.1 1005.6,163.8 1006.5,155.7 1007.5,156.8 1008.4,159.4 1009.4,159.2 1010.3,156.6 1011.3,160.6 1012.2,158.1 1013.2,155.2 1014.1,162.7 1015.1,157.9 1016.0,160.8 1017.0,157.8 1017.9,156.9 1018.9,159.8 1019.8,156.6 1020.8,157.8 1021.7,157.3 1022.7,158.8 1023.6,162.1 1024.6,160.7 1025.5,161.1 1026.5,160.4 1027.4,161.3 1028.4,156.9 1029.3,157.7 1030.3,156.7 1031.2,153.5 1032.2,156.4 1033.1,155.0 1034.1,156.8 1035.0,160.3 1036.0,158.5 1036.9,162.0 1037.9,158.1 1038.8,161.0 1039.8,153.3 1040.7,156.3 1041.7,158.4 1042.6,157.7 1043.6,163.4 1044.5,158.5 1045.5,158.4 1046.4,159.3 1047.4,160.7 1048.3,161.1 1049.3,158.6 1050.2,159.3 1051.2,159.2 1052.1,153.3 1053.1,158.0 1054.0,158.0 1055.0,159.6 1055.9,161.2 1056.9,160.4 1057.8,160.1 1058.8,159.7 1059.7,161.5 1060.7,156.6 1061.6,160.1 1062.6,158.3 1063.5,160.3 1064.5,157.2 1065.4,160.7 1066.4,163.4 1067.3,154.3 1068.3,160.0 1069.2,158.8 1070.2,154.9 1071.1,158.2 1072.1,159.7 1073.0,160.2 1074.0,160.3 1074.9,158.5 1075.9,157.0 1076.8,159.1 1077.8,160.9 1078.7,157.3 1079.7,157.9 1080.6,160.5 1081.6,160.5 1082.5,157.5 1083.5,153.6 1084.4,159.9 1085.4,157.5 1086.3,153.6 1087.3,158.9 1088.2,158.6 1089.2,157.4 1090.1,162.9 1091.1,158.2 1092.0,156.6 1093.0,160.4 1093.9,158.1 1094.9,158.1 1095.8,159.5 1096.8,159.1 1097.7,160.6 1098.7,159.4 1099.6,158.7 1100.6,161.2 1101.5,153.4 1102.5,160.0 1103.4,161.6 1104.4,161.2 1105.3,158.4 1106.3,157.3 1107.2,161.0 1108.2,158.4 1109.1,152.4 1110.1,157.6 1111.0,163.4 1112.0,158.7 1112.9,154.3 1113.9,160.4 1114.8,158.1 1115.8,159.8 1116.7,159.3 1117.7,160.6 1118.6,158.0 1119.6,163.0 1120.5,156.1 1121.5,158.3 1122.4,159.6 1123.4,155.7 1124.3,160.7 1125.3,159.8 1126.2,158.3 1127.2,158.6 1128.1,157.1 1129.1,159.1 1130.0,161.0 1131.0,164.5 1131.9,157.7 1132.9,157.2 1133.8,159.6 1134.8,159.7 1135.7,157.0 1136.7,156.6 1137.6,159.3 1138.6,157.7 1139.5,157.7 1140.5,154.1 1141.4,157.0 1142.4,156.9 1143.3,158.3 1144.3,154.2 1145.2,160.5 1146.2,157.0 1147.1,154.7 1148.1,162.3 1149.0,158.1 1150.0,160.2 1150.9,156.9 1151.9,160.6 1152.8,157.2 1153.8,156.6 1154.7,154.6 1155.7,160.8 1156.6,151.8 1157.6,157.2 1158.5,155.4 1159.5,157.6 1160.4,159.9 1161.4,159.3 1162.3,158.6 1163.3,158.1 1164.2,158.9 1165.2,160.2 1166.1,156.0 1167.1,158.6 1168.0,158.4 1169.0,159.2 1169.9,157.1 1170.9,160.6 1171.8,159.0 1172.8,156.6 1173.7,160.7 1174.7,158.1 1175.6,158.5 1176.6,165.4 1177.5,160.1 1178.5,161.3 1179.4,161.5 1180.4,158.0 1181.3,158.1 1182.3,162.5 1183.2,162.7 1184.2,150.5 1185.1,160.2 1186.1,159.0 1187.0,156.4 1188.0,158.1 1188.9,160.3 1189.9,158.7 1190.8,162.3 1191.8,163.0 1192.7,161.7 1193.7,160.1 1194.6,161.1 1195.6,160.2 1196.5,162.0 1197.5,163.1 1198.4,159.4 1199.4,158.0 1200.3,158.6 1201.3,164.8 1202.2,159.8 1203.2,157.3 1204.1,159.3 1205.1,158.7 1206.0,158.5 1207.0,159.2 1207.9,160.5 1208.9,157.4 1209.8,163.2 1210.8,156.9 1211.7,157.4 1212.7,160.0 1213.6,159.3 1214.6,161.6 1215.5,164.1 1216.5,161.9 1217.4,158.7 1218.4,159.5 1219.3,159.8 1220.3,157.8 1221.2,161.3 1222.2,160.8 1223.1,152.3 1224.1,161.9 1225.0,160.2 1226.0,160.7 1226.9,159.2 1227.9,161.0 1228.8,159.8 1229.8,155.4 1230.7,159.7 1231.7,161.2 1232.6,161.5 1233.6,159.7 1234.5,155.4 1235.5,153.8 1236.4,159.2 1237.4,166.1 1238.3,150.3 1239.3,158.2 1240.2,161.3 1241.2,155.3 1242.1,158.3 1243.1,161.5 1244.0,158.9 1245.0,163.2 1245.9,159.3 1246.9,163.5 1247.8,157.0 1248.8,160.1 1249.7,156.8 1250.7,162.3 1251.6,161.0 1252.6,161.0 1253.5,159.8 1254.5,161.4 1255.4,163.8 1256.4,161.2 1257.3,158.7 1258.3,163.4 1259.2,160.5 1260.2,163.0 1261.1,157.0 1262.1,162.9 1263.0,160.5 1264.0,162.7 1264.9,158.8 1265.9,166.5 1266.8,161.7 1267.8,159.6 1268.7,156.7 1269.7,161.1 1270.6,157.2 1271.6,158.8 1272.5,161.5 1273.5,162.0 1274.4,161.0 1275.4,160.7 1276.3,158.3 1277.3,163.3 1278.2,161.3 1279.2,157.2 1280.1,163.0 1281.1,165.3 1282.0,159.2 1283.0,164.4 1283.9,162.1 1284.9,163.5 1285.8,159.5 1286.8,162.6 1287.7,163.2 1288.7,158.8 1289.6,163.1 1290.6,164.9 1291.5,159.6 1292.5,159.0 1293.4,160.5 1294.4,159.1 1295.3,159.5 1296.3,157.3 1297.2,162.3 1298.2,160.3 1299.1,163.7 1300.1,158.2 1301.0,159.8 1302.0,167.0 1302.9,162.5 1303.9,159.3 1304.8,161.1 1305.8,159.4 1306.7,160.5 1307.7,159.8 1308.6,160.9 1309.6,165.5 1310.5,161.6 1311.5,162.5 1312.4,162.0 1313.4,160.2 1314.3,166.2 1315.3,158.0 1316.2,162.4 1317.2,162.4 1318.1,155.5 1319.1,161.4 1320.0,159.7 1321.0,162.5 1321.9,160.3 1322.9,163.6 1323.8,165.5 1324.8,162.1 1325.7,161.3 1326.7,163.3 1327.6,162.6 1328.6,166.9 1329.5,160.1 1330.5,164.4 1331.4,161.1 1332.4,163.7 1333.3,161.8 1334.3,155.0 1335.2,160.6 1336.2,167.1 1337.1,160.3 1338.1,162.9 1339.0,160.4 1340.0,163.3 1340.9,162.1 1341.9,162.9 1342.8,157.8 1343.8,163.5 1344.7,157.5 1345.7,160.3 1346.6,165.5 1347.6,163.8 1348.5,163.6 1349.5,155.6 1350.4,162.7 1351.4,164.4 1352.3,157.3 1353.3,162.9 1354.2,167.0 1355.2,161.9 1356.1,160.6 1357.1,163.3 1358.0,162.6 1359.0,163.0 1359.9,162.6 1360.9,164.6 1361.8,161.6 1362.8,165.1 1363.7,163.0 1364.7,163.0 1365.6,165.6 1366.6,162.4 1367.5,163.2 1368.5,164.8 1369.4,164.3 1370.4,164.1 1371.3,163.5 1372.3,162.6 1373.2,167.2 1374.2,164.7 1375.1,162.8 1376.1,163.4 1377.0,168.3 1378.0,158.9 1378.9,163.2 1379.9,163.8 1380.8,166.8 1381.8,166.6 1382.7,162.8 1383.7,164.2 1384.6,166.4 1385.6,165.8 1386.5,165.7 1387.5,166.0 1388.4,167.5 1389.4,165.6 1390.3,166.8 1391.3,165.8 1392.2,161.0 1393.2,159.3 1394.1,169.3 1395.1,158.2 1396.0,167.5 1397.0,167.8 1397.9,168.3 1398.9,170.1 1399.8,166.8 1400.8,167.1 1401.7,168.1 1402.7,168.1 1403.6,167.4 1404.6,168.7 1405.5,156.7 1406.5,167.0 1407.4,164.5 1408.4,166.0 1409.3,169.3 1410.3,167.9 1411.2,166.4 1412.2,167.1 1413.1,171.1 1414.1,170.5" fill="none" stroke="#3db6c9" stroke-width="1.05" clip-path="url(#co)"/>
<polyline points="370.0,166.0 370.9,167.5 371.9,164.4 372.8,164.4 373.8,163.3 374.7,168.1 375.7,168.5 376.6,165.5 377.6,167.6 378.5,167.5 379.5,162.0 380.4,168.1 381.4,164.9 382.3,167.1 383.3,165.9 384.2,165.0 385.2,165.1 386.1,171.5 387.1,165.8 388.0,166.4 389.0,165.2 389.9,169.0 390.9,168.3 391.8,165.5 392.8,169.8 393.7,169.0 394.7,161.1 395.6,167.1 396.6,159.0 397.5,168.7 398.5,167.8 399.4,162.8 400.4,167.2 401.3,165.9 402.3,160.7 403.2,165.4 404.2,168.9 405.1,169.1 406.1,166.9 407.0,162.3 408.0,162.3 408.9,165.6 409.9,166.1 410.8,169.9 411.8,165.3 412.7,165.4 413.7,169.6 414.6,158.3 415.6,165.2 416.5,161.0 417.5,168.0 418.4,165.8 419.4,165.5 420.3,164.6 421.3,166.2 422.2,164.2 423.2,167.0 424.1,162.5 425.1,166.2 426.0,165.7 427.0,161.4 427.9,167.0 428.9,165.7 429.8,166.7 430.8,162.7 431.7,165.7 432.7,165.9 433.6,162.1 434.6,166.8 435.5,160.3 436.5,165.5 437.4,165.9 438.4,167.4 439.3,160.2 440.3,169.9 441.2,165.3 442.2,167.2 443.1,162.1 444.1,163.4 445.0,163.8 446.0,162.1 446.9,165.1 447.9,157.9 448.8,167.5 449.8,165.3 450.7,166.2 451.7,161.1 452.6,163.0 453.6,164.4 454.5,161.8 455.5,162.3 456.4,162.5 457.4,159.4 458.3,164.5 459.3,159.6 460.2,162.1 461.2,159.8 462.1,164.2 463.1,165.3 464.0,166.0 465.0,164.4 465.9,168.0 466.9,164.4 467.8,165.0 468.8,163.2 469.7,159.0 470.7,155.1 471.6,161.5 472.6,158.6 473.5,163.9 474.5,159.2 475.4,164.8 476.4,157.4 477.3,161.5 478.3,166.7 479.2,158.7 480.2,166.1 481.1,164.1 482.1,162.4 483.0,163.4 484.0,163.6 484.9,162.7 485.9,163.6 486.8,156.8 487.8,161.0 488.7,161.7 489.7,160.1 490.6,162.9 491.6,163.7 492.5,161.7 493.5,161.5 494.4,162.3 495.4,162.2 496.3,162.4 497.3,161.7 498.2,163.2 499.2,166.5 500.1,160.3 501.1,161.4 502.0,161.5 503.0,161.2 503.9,163.4 504.9,160.8 505.8,162.6 506.8,160.4 507.7,157.4 508.7,154.9 509.6,158.4 510.6,160.7 511.5,157.6 512.5,162.2 513.4,157.6 514.4,161.0 515.3,161.4 516.3,158.4 517.2,163.4 518.2,160.7 519.1,153.0 520.1,160.7 521.0,161.4 522.0,162.8 522.9,160.2 523.9,155.4 524.8,158.7 525.8,156.9 526.7,162.7 527.7,159.4 528.6,157.7 529.6,163.3 530.5,165.9 531.5,162.4 532.4,155.7 533.4,160.8 534.3,162.6 535.3,161.1 536.2,158.0 537.2,155.1 538.1,160.0 539.1,161.0 540.0,155.7 541.0,160.4 541.9,159.0 542.9,158.5 543.8,161.1 544.8,159.6 545.7,160.3 546.7,159.6 547.6,161.1 548.6,162.2 549.6,157.2 550.5,159.4 551.5,158.8 552.4,159.3 553.4,160.0 554.3,158.4 555.3,162.3 556.2,157.5 557.2,158.5 558.1,157.8 559.1,159.2 560.0,159.4 561.0,159.8 561.9,155.4 562.9,157.3 563.8,154.1 564.8,160.1 565.7,156.2 566.7,158.8 567.6,157.1 568.6,162.0 569.5,157.7 570.5,150.7 571.4,161.8 572.4,157.0 573.3,159.9 574.3,160.4 575.2,162.3 576.2,156.4 577.1,157.4 578.1,157.1 579.0,158.9 580.0,158.8 580.9,158.0 581.9,158.1 582.8,159.8 583.8,156.7 584.7,158.0 585.7,158.4 586.6,158.6 587.6,154.2 588.5,159.0 589.5,161.1 590.4,156.6 591.4,161.1 592.3,159.9 593.3,157.1 594.2,158.7 595.2,157.4 596.1,158.3 597.1,157.8 598.0,162.0 599.0,157.5 599.9,160.3 600.9,158.1 601.8,159.0 602.8,157.5 603.7,158.0 604.7,162.2 605.6,154.5 606.6,163.4 607.5,156.1 608.5,148.3 609.4,157.4 610.4,160.6 611.3,156.4 612.3,160.0 613.2,162.3 614.2,156.2 615.1,159.3 616.1,157.0 617.0,158.9 618.0,160.6 618.9,143.5 619.9,138.8 620.8,154.4 621.8,156.1 622.7,161.4 623.7,154.1 624.6,154.5 625.6,157.5 626.5,156.1 627.5,154.7 628.4,156.8 629.4,159.9 630.3,157.5 631.3,158.6 632.2,159.8 633.2,157.4 634.1,159.2 635.1,161.4 636.0,158.4 637.0,158.3 637.9,158.9 638.9,156.0 639.8,155.3 640.8,156.0 641.7,157.4 642.7,156.3 643.6,157.0 644.6,156.4 645.5,158.3 646.5,157.8 647.4,159.0 648.4,160.0 649.3,156.6 650.3,159.8 651.2,156.7 652.2,152.3 653.1,154.4 654.1,159.1 655.0,159.9 656.0,152.7 656.9,156.0 657.9,159.1 658.8,159.2 659.8,158.9 660.7,166.2 661.7,155.7 662.6,154.9 663.6,133.4 664.5,137.4 665.5,154.6 666.4,156.8 667.4,161.3 668.3,157.5 669.3,157.0 670.2,156.4 671.2,156.3 672.1,150.6 673.1,158.2 674.0,157.8 675.0,154.2 675.9,154.6 676.9,162.2 677.8,160.2 678.8,154.5 679.7,154.1 680.7,160.7 681.6,158.0 682.6,156.4 683.5,159.2 684.5,160.4 685.4,159.7 686.4,160.9 687.3,158.6 688.3,159.2 689.2,159.9 690.2,161.3 691.1,159.3 692.1,159.0 693.0,154.1 694.0,155.6 694.9,157.9 695.9,156.1 696.8,160.0 697.8,157.9 698.7,160.0 699.7,154.6 700.6,159.1 701.6,159.6 702.5,155.4 703.5,160.2 704.4,156.7 705.4,158.6 706.3,156.5 707.3,157.7 708.2,155.0 709.2,157.9 710.1,155.9 711.1,156.8 712.0,152.9 713.0,161.6 713.9,155.9 714.9,158.7 715.8,158.3 716.8,160.0 717.7,150.9 718.7,159.0 719.6,156.0 720.6,139.3 721.5,142.3 722.5,156.7 723.4,159.2 724.4,155.0 725.3,156.0 726.3,157.3 727.2,159.0 728.2,157.6 729.1,155.7 730.1,161.0 731.0,156.5 732.0,154.9 732.9,158.8 733.9,155.9 734.8,157.0 735.8,154.0 736.7,161.2 737.7,156.7 738.6,151.6 739.6,154.6 740.5,153.2 741.5,153.9 742.4,162.2 743.4,158.3 744.3,158.7 745.3,149.6 746.2,160.5 747.2,159.1 748.1,156.4 749.1,158.7 750.0,159.4 751.0,157.9 751.9,156.2 752.9,157.2 753.8,158.8 754.8,153.0 755.7,154.1 756.7,157.7 757.6,157.2 758.6,162.1 759.5,153.9 760.5,159.2 761.4,156.3 762.4,156.2 763.3,157.8 764.3,157.2 765.2,154.6 766.2,160.2 767.1,157.6 768.1,154.8 769.0,155.9 770.0,154.8 770.9,159.0 771.9,159.0 772.8,156.4 773.8,154.0 774.7,156.4 775.7,157.3 776.6,161.4 777.6,160.4 778.5,157.3 779.5,155.5 780.4,157.1 781.4,157.8 782.3,156.1 783.3,155.9 784.2,159.2 785.2,156.4 786.1,156.8 787.1,153.6 788.0,156.2 789.0,151.7 789.9,158.1 790.9,154.6 791.8,156.1 792.8,156.2 793.7,157.8 794.7,151.0 795.6,159.3 796.6,160.3 797.5,154.6 798.5,156.7 799.4,153.6 800.4,160.0 801.3,164.0 802.3,164.2 803.2,154.9 804.2,158.9 805.1,159.7 806.1,156.6 807.0,159.8 808.0,159.9 808.9,158.2 809.9,162.3 810.8,155.9 811.8,157.8 812.7,158.4 813.7,156.3 814.6,160.5 815.6,157.6 816.5,155.1 817.5,158.7 818.4,160.8 819.4,158.8 820.3,151.0 821.3,157.3 822.2,158.3 823.2,158.1 824.1,160.3 825.1,155.6 826.0,155.5 827.0,154.0 827.9,154.4 828.9,156.9 829.8,160.5 830.8,158.5 831.7,158.8 832.7,157.5 833.6,155.7 834.6,154.4 835.5,150.8 836.5,155.5 837.4,154.9 838.4,165.6 839.3,156.3 840.3,156.3 841.2,157.7 842.2,156.2 843.1,156.6 844.1,160.9 845.0,160.2 846.0,157.1 846.9,158.6 847.9,156.1 848.8,155.8 849.8,158.0 850.7,155.7 851.7,154.7 852.6,156.7 853.6,155.1 854.5,161.1 855.5,156.6 856.4,155.1 857.4,160.1 858.3,156.0 859.3,161.4 860.2,158.4 861.2,157.7 862.1,159.4 863.1,157.7 864.0,156.7 865.0,160.0 865.9,157.1 866.9,156.6 867.8,160.5 868.8,161.4 869.7,156.7 870.7,153.9 871.6,153.2 872.6,160.6 873.5,151.7 874.5,154.7 875.4,154.9 876.4,155.8 877.3,157.0 878.3,156.5 879.2,155.9 880.2,158.4 881.1,157.3 882.1,158.1 883.0,153.4 884.0,154.3 884.9,158.9 885.9,156.3 886.8,157.5 887.8,157.6 888.7,157.9 889.7,157.1 890.6,156.9 891.6,142.3 892.5,124.4 893.5,142.3 894.4,157.8 895.4,160.1 896.3,157.5 897.3,154.1 898.2,157.8 899.2,160.0 900.1,156.5 901.1,156.9 902.0,116.9 903.0,103.3 903.9,148.5 904.9,158.2 905.8,153.6 906.8,159.5 907.7,155.1 908.7,157.8 909.6,158.0 910.6,150.8 911.5,153.2 912.5,156.1 913.4,145.5 914.4,148.0 915.3,159.0 916.3,157.3 917.2,156.0 918.2,158.9 919.1,159.1 920.1,158.0 921.0,160.9 922.0,160.9 922.9,157.8 923.9,153.2 924.8,159.0 925.8,158.7 926.7,161.2 927.7,162.6 928.6,158.5 929.6,162.1 930.5,161.3 931.5,160.2 932.4,158.7 933.4,159.2 934.3,155.8 935.3,134.6 936.2,138.5 937.2,156.8 938.1,162.3 939.1,157.3 940.0,156.3 941.0,158.0 941.9,158.5 942.9,161.2 943.8,150.7 944.8,162.9 945.7,161.4 946.7,157.9 947.6,158.3 948.6,160.3 949.5,153.2 950.5,158.6 951.4,158.6 952.4,160.4 953.3,160.7 954.3,153.4 955.2,156.1 956.2,154.9 957.1,154.1 958.1,158.5 959.0,161.9 960.0,159.5 960.9,160.1 961.9,160.0 962.8,149.7 963.8,160.1 964.7,159.6 965.7,157.8 966.6,161.3 967.6,158.9 968.5,160.6 969.5,158.3 970.4,157.1 971.4,155.8 972.3,157.9 973.3,159.0 974.2,159.5 975.2,160.0 976.1,156.6 977.1,159.4 978.0,158.4 979.0,156.4 979.9,159.5 980.9,149.6 981.8,162.4 982.8,157.0 983.7,157.4 984.7,154.9 985.6,161.4 986.6,157.5 987.5,158.5 988.5,157.8 989.4,154.0 990.4,157.0 991.3,159.7 992.3,157.7 993.2,160.4 994.2,157.6 995.1,158.9 996.1,158.9 997.0,160.3 998.0,159.5 998.9,159.1 999.9,161.1 1000.8,157.7 1001.8,159.6 1002.7,160.0 1003.7,158.4 1004.6,157.1 1005.6,163.8 1006.5,155.7 1007.5,156.8 1008.4,159.4 1009.4,159.2 1010.3,156.6 1011.3,160.6 1012.2,158.1 1013.2,155.2 1014.1,162.7 1015.1,157.9 1016.0,160.8 1017.0,157.8 1017.9,156.9 1018.9,159.8 1019.8,156.6 1020.8,157.8 1021.7,157.3 1022.7,158.8 1023.6,162.1 1024.6,160.7 1025.5,161.1 1026.5,160.4 1027.4,161.3 1028.4,156.9 1029.3,157.7 1030.3,156.7 1031.2,153.5 1032.2,156.4 1033.1,155.0 1034.1,156.8 1035.0,160.3 1036.0,158.5 1036.9,162.0 1037.9,158.1 1038.8,161.0 1039.8,153.3 1040.7,156.3 1041.7,158.4 1042.6,157.7 1043.6,163.4 1044.5,158.5 1045.5,158.4 1046.4,159.3 1047.4,160.7 1048.3,161.1 1049.3,158.6 1050.2,159.3 1051.2,159.2 1052.1,153.3 1053.1,158.0 1054.0,158.0 1055.0,159.6 1055.9,161.2 1056.9,160.4 1057.8,160.1 1058.8,159.7 1059.7,161.5 1060.7,156.6 1061.6,160.1 1062.6,158.3 1063.5,160.3 1064.5,157.2 1065.4,160.7 1066.4,163.4 1067.3,154.3 1068.3,160.0 1069.2,158.8 1070.2,154.9 1071.1,158.2 1072.1,159.7 1073.0,160.2 1074.0,160.3 1074.9,158.5 1075.9,157.0 1076.8,159.1 1077.8,160.9 1078.7,157.3 1079.7,157.9 1080.6,160.5 1081.6,160.5 1082.5,157.5 1083.5,153.6 1084.4,159.9 1085.4,157.5 1086.3,153.6 1087.3,158.9 1088.2,158.6 1089.2,157.4 1090.1,162.9 1091.1,158.2 1092.0,156.6 1093.0,160.4 1093.9,158.1 1094.9,158.1 1095.8,159.5 1096.8,159.1 1097.7,160.6 1098.7,159.4 1099.6,158.7 1100.6,161.2 1101.5,153.4 1102.5,160.0 1103.4,161.6 1104.4,161.2 1105.3,158.4 1106.3,157.3 1107.2,161.0 1108.2,158.4 1109.1,152.4 1110.1,157.6 1111.0,163.4 1112.0,158.7 1112.9,154.3 1113.9,160.4 1114.8,158.1 1115.8,159.8 1116.7,159.3 1117.7,160.6 1118.6,158.0 1119.6,163.0 1120.5,156.1 1121.5,158.3 1122.4,159.6 1123.4,155.7 1124.3,160.7 1125.3,159.8 1126.2,158.3 1127.2,158.6 1128.1,157.1 1129.1,159.1 1130.0,161.0 1131.0,164.5 1131.9,157.7 1132.9,157.2 1133.8,159.6 1134.8,159.7 1135.7,157.0 1136.7,156.6 1137.6,159.3 1138.6,157.7 1139.5,157.7 1140.5,154.1 1141.4,157.0 1142.4,156.9 1143.3,158.3 1144.3,154.2 1145.2,160.5 1146.2,157.0 1147.1,154.7 1148.1,162.3 1149.0,158.1 1150.0,160.2 1150.9,156.9 1151.9,160.6 1152.8,157.2 1153.8,156.6 1154.7,154.6 1155.7,160.8 1156.6,151.8 1157.6,157.2 1158.5,155.4 1159.5,157.6 1160.4,159.9 1161.4,159.3 1162.3,158.6 1163.3,158.1 1164.2,158.9 1165.2,160.2 1166.1,156.0 1167.1,158.6 1168.0,158.4 1169.0,159.2 1169.9,157.1 1170.9,160.6 1171.8,159.0 1172.8,156.6 1173.7,160.7 1174.7,158.1 1175.6,158.5 1176.6,165.4 1177.5,160.1 1178.5,161.3 1179.4,161.5 1180.4,158.0 1181.3,158.1 1182.3,162.5 1183.2,162.7 1184.2,150.5 1185.1,160.2 1186.1,159.0 1187.0,156.4 1188.0,158.1 1188.9,160.3 1189.9,158.7 1190.8,162.3 1191.8,163.0 1192.7,161.7 1193.7,160.1 1194.6,161.1 1195.6,160.2 1196.5,162.0 1197.5,163.1 1198.4,159.4 1199.4,158.0 1200.3,158.6 1201.3,164.8 1202.2,159.8 1203.2,157.3 1204.1,159.3 1205.1,158.7 1206.0,158.5 1207.0,159.2 1207.9,160.5 1208.9,157.4 1209.8,163.2 1210.8,156.9 1211.7,157.4 1212.7,160.0 1213.6,159.3 1214.6,161.6 1215.5,164.1 1216.5,161.9 1217.4,158.7 1218.4,159.5 1219.3,159.8 1220.3,157.8 1221.2,161.3 1222.2,160.8 1223.1,152.3 1224.1,161.9 1225.0,160.2 1226.0,160.7 1226.9,159.2 1227.9,161.0 1228.8,159.8 1229.8,155.4 1230.7,159.7 1231.7,161.2 1232.6,161.5 1233.6,159.7 1234.5,155.4 1235.5,153.8 1236.4,159.2 1237.4,166.1 1238.3,150.3 1239.3,158.2 1240.2,161.3 1241.2,155.3 1242.1,158.3 1243.1,161.5 1244.0,158.9 1245.0,163.2 1245.9,159.3 1246.9,163.5 1247.8,157.0 1248.8,160.1 1249.7,156.8 1250.7,162.3 1251.6,161.0 1252.6,161.0 1253.5,159.8 1254.5,161.4 1255.4,163.8 1256.4,161.2 1257.3,158.7 1258.3,163.4 1259.2,160.5 1260.2,163.0 1261.1,157.0 1262.1,162.9 1263.0,160.5 1264.0,162.7 1264.9,158.8 1265.9,166.5 1266.8,161.7 1267.8,159.6 1268.7,156.7 1269.7,161.1 1270.6,157.2 1271.6,158.8 1272.5,161.5 1273.5,162.0 1274.4,161.0 1275.4,160.7 1276.3,158.3 1277.3,163.3 1278.2,161.3 1279.2,157.2 1280.1,163.0 1281.1,165.3 1282.0,159.2 1283.0,164.4 1283.9,162.1 1284.9,163.5 1285.8,159.5 1286.8,162.6 1287.7,163.2 1288.7,158.8 1289.6,163.1 1290.6,164.9 1291.5,159.6 1292.5,159.0 1293.4,160.5 1294.4,159.1 1295.3,159.5 1296.3,157.3 1297.2,162.3 1298.2,160.3 1299.1,163.7 1300.1,158.2 1301.0,159.8 1302.0,167.0 1302.9,162.5 1303.9,159.3 1304.8,161.1 1305.8,159.4 1306.7,160.5 1307.7,159.8 1308.6,160.9 1309.6,165.5 1310.5,161.6 1311.5,162.5 1312.4,162.0 1313.4,160.2 1314.3,166.2 1315.3,158.0 1316.2,162.4 1317.2,162.4 1318.1,155.5 1319.1,161.4 1320.0,159.7 1321.0,162.5 1321.9,160.3 1322.9,163.6 1323.8,165.5 1324.8,162.1 1325.7,161.3 1326.7,163.3 1327.6,162.6 1328.6,166.9 1329.5,160.1 1330.5,164.4 1331.4,161.1 1332.4,163.7 1333.3,161.8 1334.3,155.0 1335.2,160.6 1336.2,167.1 1337.1,160.3 1338.1,162.9 1339.0,160.4 1340.0,163.3 1340.9,162.1 1341.9,162.9 1342.8,157.8 1343.8,163.5 1344.7,157.5 1345.7,160.3 1346.6,165.5 1347.6,163.8 1348.5,163.6 1349.5,155.6 1350.4,162.7 1351.4,164.4 1352.3,157.3 1353.3,162.9 1354.2,167.0 1355.2,161.9 1356.1,160.6 1357.1,163.3 1358.0,162.6 1359.0,163.0 1359.9,162.6 1360.9,164.6 1361.8,161.6 1362.8,165.1 1363.7,163.0 1364.7,163.0 1365.6,165.6 1366.6,162.4 1367.5,163.2 1368.5,164.8 1369.4,164.3 1370.4,164.1 1371.3,163.5 1372.3,162.6 1373.2,167.2 1374.2,164.7 1375.1,162.8 1376.1,163.4 1377.0,168.3 1378.0,158.9 1378.9,163.2 1379.9,163.8 1380.8,166.8 1381.8,166.6 1382.7,162.8 1383.7,164.2 1384.6,166.4 1385.6,165.8 1386.5,165.7 1387.5,166.0 1388.4,167.5 1389.4,165.6 1390.3,166.8 1391.3,165.8 1392.2,161.0 1393.2,159.3 1394.1,169.3 1395.1,158.2 1396.0,167.5 1397.0,167.8 1397.9,168.3 1398.9,170.1 1399.8,166.8 1400.8,167.1 1401.7,168.1 1402.7,168.1 1403.6,167.4 1404.6,168.7 1405.5,156.7 1406.5,167.0 1407.4,164.5 1408.4,166.0 1409.3,169.3 1410.3,167.9 1411.2,166.4 1412.2,167.1 1413.1,171.1 1414.1,170.5" fill="none" stroke="#36d2e0" stroke-width="1.05" clip-path="url(#cb)"/>
<line x1="707.7" y1="156" x2="707.7" y2="197.5" stroke="#19e3f0" stroke-width="1.4"/>
<rect x="889" y="93" width="7" height="104.5" fill="rgba(255,255,255,0.22)"/>
<line x1="892.5" y1="93" x2="892.5" y2="197.5" stroke="#e8302a" stroke-width="1.4"/>
<line x1="370.3" y1="93" x2="370.3" y2="198.1" stroke="#cfcfcf" stroke-width="1.3"/>
<line x1="370" y1="197.5" x2="1414.6" y2="197.5" stroke="#cfcfcf" stroke-width="1.3"/>
</svg>
<div class="t" style="left:159.5px;width:200px;text-align:right;top:102.05000000000001px;height:22.7px;line-height:22.7px;color:#f2f2f2;font-size:14px;">-60</div>
<div class="t" style="left:159.5px;width:200px;text-align:right;top:134.45000000000002px;height:22.7px;line-height:22.7px;color:#f2f2f2;font-size:14px;">-80</div>
<div class="t" style="left:159.5px;width:200px;text-align:right;top:166.85px;height:22.7px;line-height:22.7px;color:#f2f2f2;font-size:14px;">-100</div>
<div class="t" style="left:335.3px;width:200px;text-align:center;top:210.7px;height:22.7px;line-height:22.7px;color:#f2f2f2;font-size:14px;">161.4M</div>
<div class="t" style="left:422.29999999999507px;width:200px;text-align:center;top:210.7px;height:22.7px;line-height:22.7px;color:#f2f2f2;font-size:14px;">161.6M</div>
<div class="t" style="left:509.30000000000246px;width:200px;text-align:center;top:210.7px;height:22.7px;line-height:22.7px;color:#f2f2f2;font-size:14px;">161.8M</div>
<div class="t" style="left:596.2999999999975px;width:200px;text-align:center;top:210.7px;height:22.7px;line-height:22.7px;color:#f2f2f2;font-size:14px;">162M</div>
<div class="t" style="left:683.300000000005px;width:200px;text-align:center;top:210.7px;height:22.7px;line-height:22.7px;color:#f2f2f2;font-size:14px;">162.2M</div>
<div class="t" style="left:770.3px;width:200px;text-align:center;top:210.7px;height:22.7px;line-height:22.7px;color:#f2f2f2;font-size:14px;">162.4M</div>
<div class="t" style="left:857.299999999995px;width:200px;text-align:center;top:210.7px;height:22.7px;line-height:22.7px;color:#f2f2f2;font-size:14px;">162.6M</div>
<div class="t" style="left:944.3000000000025px;width:200px;text-align:center;top:210.7px;height:22.7px;line-height:22.7px;color:#f2f2f2;font-size:14px;">162.8M</div>
<div class="t" style="left:1031.2999999999975px;width:200px;text-align:center;top:210.7px;height:22.7px;line-height:22.7px;color:#f2f2f2;font-size:14px;">163M</div>
<div class="t" style="left:1118.300000000005px;width:200px;text-align:center;top:210.7px;height:22.7px;line-height:22.7px;color:#f2f2f2;font-size:14px;">163.2M</div>
<div class="t" style="left:1205.3px;width:200px;text-align:center;top:210.7px;height:22.7px;line-height:22.7px;color:#f2f2f2;font-size:14px;">163.4M</div>
<div class="t" style="left:1292.299999999995px;width:200px;text-align:center;top:210.7px;height:22.7px;line-height:22.7px;color:#f2f2f2;font-size:14px;">163.6M</div>
<div class="t" style="left:438.29999999999995px;width:200px;text-align:center;top:165.5px;height:22.7px;line-height:22.7px;color:#f4f4f4;font-size:14.2px;-webkit-text-stroke:0.45px currentColor">Marine</div>
<div style="left:370px;top:239px;width:1045px;height:694px;background:linear-gradient(90deg,#8ec7fd 0.00%,#94cafd 0.57%,#9acdfc 1.15%,#a0d0fc 1.72%,#a5d3fb 2.30%,#abd5fb 2.87%,#b3d9f9 3.44%,#bfdff7 4.02%,#cae5f3 4.59%,#d5eaee 5.17%,#dfefe6 5.74%,#e8f3dd 6.32%,#eff7d1 6.89%,#f4fac4 7.46%,#f8fbb5 8.04%,#fbfda3 8.61%,#fdfd91 9.19%,#fefe7e 9.76%,#fefd6e 10.33%,#fffc5f 10.91%,#fffb51 11.48%,#fffa4a 12.06%,#fff945 12.63%,#fff83f 13.21%,#fff83e 13.78%,#fff83d 14.35%,#fff83c 14.93%,#fff83b 15.50%,#fff73a 16.08%,#fff739 16.65%,#fff738 17.22%,#fff737 17.80%,#fff636 18.37%,#fff635 18.95%,#fff634 19.52%,#fff633 20.10%,#fff635 20.67%,#fff737 21.24%,#fff739 21.82%,#fff738 22.39%,#fff635 22.97%,#fff533 23.54%,#fff531 24.11%,#fff531 24.69%,#fff531 25.26%,#fff530 25.84%,#fff430 26.41%,#fff42f 26.99%,#fff42f 27.56%,#fff42f 28.13%,#fff42f 28.71%,#fff430 29.28%,#fff530 29.86%,#fff531 30.43%,#fff532 31.00%,#fff533 31.58%,#fff634 32.15%,#fff635 32.73%,#fff636 33.30%,#fff636 33.88%,#fff737 34.45%,#fff737 35.02%,#fff737 35.60%,#fff737 36.17%,#fff737 36.75%,#fff737 37.32%,#fff737 37.89%,#fff737 38.47%,#fff738 39.04%,#fff738 39.62%,#fff738 40.19%,#fff738 40.77%,#fff738 41.34%,#fff738 41.91%,#fff738 42.49%,#fff738 43.06%,#fff739 43.64%,#fff739 44.21%,#fff739 44.78%,#fff739 45.36%,#fff739 45.93%,#fff739 46.51%,#fff739 47.08%,#fff739 47.66%,#fff73a 48.23%,#fff73a 48.80%,#fff73a 49.38%,#fff73a 49.95%,#fff83b 50.53%,#fff83b 51.10%,#fff83c 51.67%,#fff83d 52.25%,#fff83d 52.82%,#fff83e 53.40%,#fff83f 53.97%,#fff940 54.55%,#fff940 55.12%,#fff941 55.69%,#fff942 56.27%,#fff943 56.84%,#fff944 57.42%,#fffa45 57.99%,#fffa46 58.56%,#fffa47 59.14%,#fffa48 59.71%,#fffa49 60.29%,#fffa4a 60.86%,#fffa4b 61.44%,#fffa4b 62.01%,#fffb4c 62.58%,#fffb4d 63.16%,#fffb4e 63.73%,#fffb4f 64.31%,#fffb50 64.88%,#fffb51 65.45%,#fffb52 66.03%,#fffb52 66.60%,#fffb53 67.18%,#fffc54 67.75%,#fffc55 68.33%,#fffc56 68.90%,#fffc57 69.47%,#fffc58 70.05%,#fffc59 70.62%,#fffc5a 71.20%,#fffc5b 71.77%,#fffc5c 72.34%,#fffc5d 72.92%,#fffc5e 73.49%,#fffc5f 74.07%,#fffc5f 74.64%,#fffd60 75.22%,#fffd61 75.79%,#fffd62 76.36%,#fffd63 76.94%,#fffd64 77.51%,#fffd67 78.09%,#fffd6a 78.66%,#fefd6c 79.23%,#fefd6f 79.81%,#fefd71 80.38%,#fefd74 80.96%,#fefd77 81.53%,#fefe79 82.11%,#fefe7c 82.68%,#fefe7f 83.25%,#fefe81 83.83%,#fefe84 84.40%,#fdfe87 84.98%,#fdfe8f 85.55%,#fcfd97 86.12%,#fbfd9f 86.70%,#fafda7 87.27%,#f9fcae 87.85%,#f8fbb6 88.42%,#f6fbbd 89.00%,#f3f9c7 89.57%,#eff7d1 90.14%,#eaf4da 90.72%,#e4f2e1 91.29%,#ddeee8 91.87%,#d2e9ef 92.44%,#c7e3f4 92.92%,#c5e2f5 93.01%,#c2e1f6 93.11%,#c0e0f6 93.21%,#bedff7 93.30%,#bddef7 93.40%,#bbdef8 93.59%,#b7dbf9 94.16%,#b2d9f9 94.74%,#aed7fa 95.31%,#a9d4fb 95.89%,#a4d2fc 96.46%,#a0d0fc 97.03%,#9dcefc 97.61%,#99ccfc 98.18%,#96cbfd 98.76%,#92c9fd 99.33%,#8fc7fd 99.90%,#8ec7fd 100.00%)"></div>
<div style="left:618.6px;top:239px;width:1.8px;height:694px;background:#ff4a12;"></div>
<div style="left:662.5px;top:239px;width:2.0px;height:694px;background:#ff4010;"></div>
<div style="left:719.55px;top:239px;width:1.5px;height:694px;background:#ff5a14;"></div>
<div style="left:890.7px;top:239px;width:3.0px;height:694px;background:#d80810;"></div>
<div style="left:901.5px;top:239px;width:3.0px;height:694px;background:#d00808;"></div>
<div style="left:913.6px;top:239px;width:1.2px;height:694px;background:#ff8a20;"></div>
<div style="left:934.7px;top:239px;width:1.6px;height:694px;background:#ff6a14;"></div>
<div style="left:1342.1000000000001px;top:239px;width:1.6px;height:694px;background:#fcec40;"></div>
<canvas id="wf" width="1045" height="694" style="position:absolute;left:370px;top:239px;width:1045px;height:694px"></canvas>
<script>
(function(){
var cv=document.getElementById('wf');var W=1045,H=694,SC=1;var ctx=cv.getContext('2d');
var img=ctx.createImageData(W,H);var d=img.data;
var s=123456789;function rnd(){s^=s<<13;s^=s>>>17;s^=s<<5;return ((s>>>0)%1000000)/1000000;}
function gauss(){var u=rnd()||1e-6,v=rnd();return Math.sqrt(-2*Math.log(u))*Math.cos(6.2831853*v);}
function skew(){var u=rnd()*0.999999+1e-7;var E=-Math.log(u);return (Math.log(E)+0.5772)/1.2825;}
var CM=[[0, 0, 32], [0, 0, 48], [0, 0, 80], [0, 0, 145], [30, 144, 255], [255, 255, 255], [255, 255, 0], [254, 109, 22], [255, 0, 0], [198, 0, 0], [159, 0, 0], [117, 0, 0], [74, 0, 0]];var PR=[[370, 4.5], [404, 4.66], [424, 4.88], [451, 5.22], [473, 5.52], [491, 5.72], [508, 5.8], [579, 5.87], [600, 5.83], [619, 5.88], [667, 5.9], [723, 5.85], [890, 5.83], [938, 5.8], [1000, 5.75], [1098, 5.68], [1180, 5.62], [1258, 5.47], [1300, 5.22], [1330, 4.94], [1345, 4.74], [1380, 4.6], [1415, 4.5]];
function prof(x){for(var i=0;i<PR.length-1;i++){var a=PR[i],b=PR[i+1];if(x>=a[0]&&x<=b[0])return a[1]+(b[1]-a[1])*(x-a[0])/(b[0]-a[0]);}return PR[PR.length-1][1];}
var col=new Float32Array(W);var wn=new Float32Array(W);for(var x=0;x<W;x++)wn[x]=gauss();
var sm=new Float32Array(W);var K=[];var ks=0;for(var k=-14;k<=14;k++){var g=Math.exp(-k*k/(2*5*5));K.push(g);ks+=g*g;}ks=Math.sqrt(ks);
for(var x=0;x<W;x++){var a=0;for(var k=-14;k<=14;k++){var xx=Math.min(W-1,Math.max(0,x+k));a+=wn[xx]*K[k+14];}sm[x]=a/ks;}
for(var x=0;x<W;x++){var X0=370+(x+0.5)*SC;var amp=(X0>490&&X0<1010)?1:((X0>1010&&X0<1250)?0.6:0.3);var fine=(rnd()<0.18)?0.1+0.08*rnd():0;col[x]=prof(X0)+amp*(0.075*sm[x]+fine);}
var smul=new Float32Array(W);for(var x=0;x<W;x++){var X1=370+(x+0.5)*SC;var m=1;if(X1>400&&X1<500){m=1+0.35*Math.sin(Math.PI*(X1-400)/100);}if(X1>1260&&X1<1350){m=1+0.35*Math.sin(Math.PI*(X1-1260)/90);}smul[x]=m;}
var lines=[[619.2,7.6,0.75],[663.3,7.62,0.8],[914.2,6.8,0.7],[935.5,7.35,0.9],[1342.9,5.9,0.6]];
var bseg1=[],bseg2=[];var y=0;while(y<H){var len=2+Math.floor(rnd()*7);var on=rnd()<0.72;bseg1.push([y,len,on?1:0]);y+=len;}
y=0;var tog=0;while(y<H){var len=tog?(14+Math.floor(rnd()*28)):(5+Math.floor(rnd()*10));bseg2.push([y,len,tog]);y+=len;tog=1-tog;}
function segv(seg,y){for(var i=0;i<seg.length;i++){if(y>=seg[i][0]&&y<seg[i][0]+seg[i][1])return seg[i][2];}return 0;}
var wig=0;
for(var y=0;y<H;y++){
 var b1=segv(bseg1,y),b2=segv(bseg2,y);var w1=b1?(1.0+rnd()*2.0):0.0, w2=b2?(1.8+rnd()*1.0):0.0;
 wig+=(rnd()-0.5)*0.22; wig*=0.992; if(wig>1.4)wig=1.4; if(wig<-1.4)wig=-1.4;
 for(var x=0;x<W;x++){
  var X=370+(x+0.5)*SC;var v=col[x]+gauss()*0.3*smul[x];
  for(var k=0;k<lines.length;k++){var L=lines[k];var dx=Math.abs(X-L[0]);if(dx<L[2]){v=Math.max(v,L[1]);}}
  var dx=Math.abs(X-(720.3+wig));if(dx<1.0){v=Math.max(v,7.45);}
  dx=Math.abs(X-892.2);if(dx<0.8){v=Math.max(v,8.7+gauss()*0.3);}else if(dx<w1+0.3){v=Math.max(v,7.9+gauss()*0.3);}
  dx=Math.abs(X-903);if(dx<0.6){v=Math.max(v,b2?8.6:9.8);}else if(dx<w2+0.3){v=Math.max(v,8.1+gauss()*0.2);}
  if(v<0)v=0;if(v>12)v=12;var i=Math.floor(v);if(i>11)i=11;var t=v-i;var a=CM[i],c=CM[i+1];
  var p=(y*W+x)*4;d[p]=a[0]+(c[0]-a[0])*t;d[p+1]=a[1]+(c[1]-a[1])*t;d[p+2]=a[2]+(c[2]-a[2])*t;d[p+3]=255;
 }
}
var tmp=new Float32Array(d.length);
for(var y=0;y<H;y++){for(var x=0;x<W;x++){var p=(y*W+x)*4;var pl=(y*W+Math.max(0,x-1))*4,pr=(y*W+Math.min(W-1,x+1))*4;for(var c=0;c<3;c++){tmp[p+c]=(d[pl+c]+3*d[p+c]+d[pr+c])/5;}}}
for(var y=0;y<H;y++){var yu=Math.max(0,y-1),yd=Math.min(H-1,y+1);for(var x=0;x<W;x++){var p=(y*W+x)*4;var pu=(yu*W+x)*4,pd=(yd*W+x)*4;for(var c=0;c<3;c++){d[p+c]=(tmp[pu+c]+3*tmp[p+c]+tmp[pd+c])/5;}}}
ctx.putImageData(img,0,0);
})();
</script>
<div class="t" style="left:1355.7px;width:200px;text-align:center;top:81.6px;height:22.7px;line-height:22.7px;color:#f2f2f2;font-size:14px;">Zoom</div>
<div style="left:1445.8px;top:105px;width:20.3px;height:154.3px;background:#232426;"></div>
<div style="left:1446.6px;top:248.5px;width:18.7px;height:10.3px;background:#3d85e0;"></div>
<div class="t" style="left:1355.7px;width:200px;text-align:center;top:282.1px;height:22.7px;line-height:22.7px;color:#f2f2f2;font-size:14px;">Max</div>
<div style="left:1445.8px;top:305.5px;width:20.3px;height:154.6px;background:#232426;"></div>
<div style="left:1446.6px;top:406px;width:18.7px;height:10.1px;background:#3d85e0;"></div>
<div class="t" style="left:1355.7px;width:200px;text-align:center;top:482.1px;height:22.7px;line-height:22.7px;color:#f2f2f2;font-size:14px;">Min</div>
<div style="left:1445.8px;top:506px;width:20.3px;height:155px;background:#232426;"></div>
<div style="left:1446.6px;top:550.3px;width:18.7px;height:9.9px;background:#3d85e0;"></div>
</body></html>
